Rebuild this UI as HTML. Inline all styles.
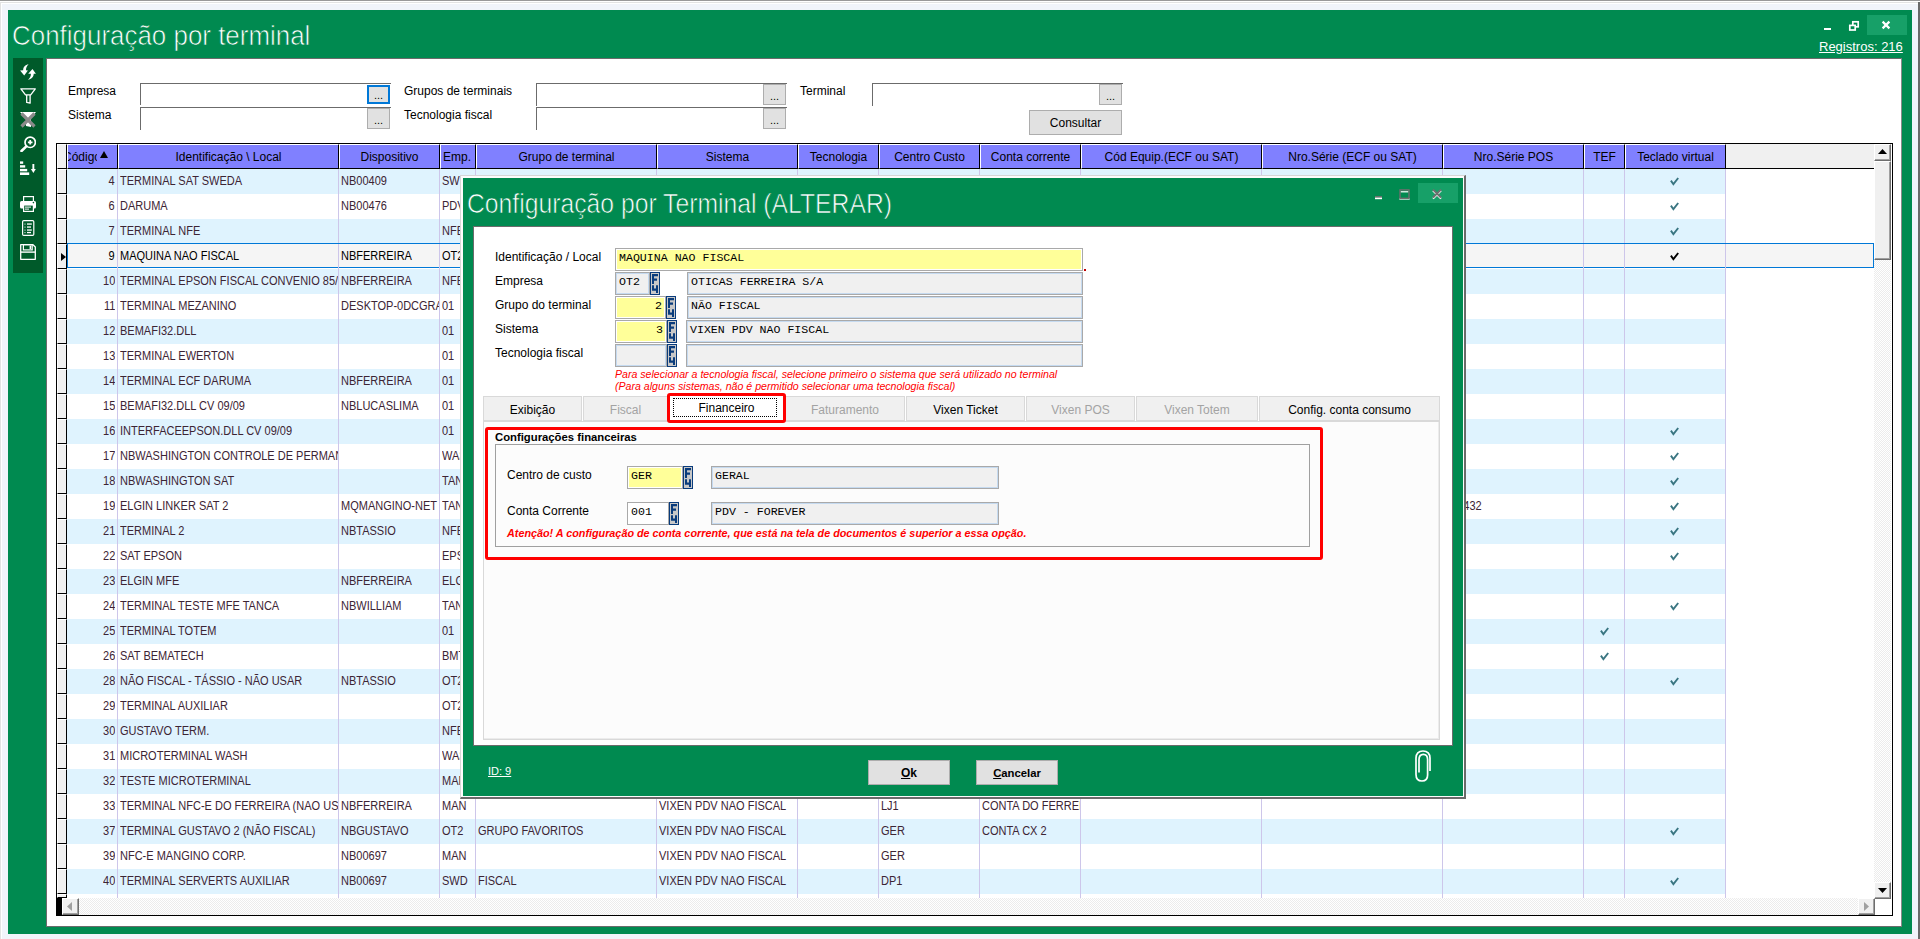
<!DOCTYPE html><html><head><meta charset="utf-8"><title>Configuração por terminal</title><style>
*{margin:0;padding:0;box-sizing:border-box}
html,body{width:1920px;height:939px;overflow:hidden;background:#f1f4fa;font-family:"Liberation Sans",sans-serif;position:relative}
.a{position:absolute}
.t{position:absolute;white-space:pre;line-height:1}
</style></head><body>
<div class="a" style="left:0px;top:0px;width:1920px;height:1px;background:#999999"></div>
<div class="a" style="left:0px;top:1px;width:1920px;height:1px;background:#ffffff"></div>
<div class="a" style="left:0px;top:2px;width:1918px;height:1px;background:#e2e2e2"></div>
<div class="a" style="left:1px;top:3px;width:1917px;height:1px;background:#ffffff"></div>
<div class="a" style="left:0px;top:2px;width:1px;height:937px;background:#e2e2e2"></div>
<div class="a" style="left:1px;top:3px;width:1px;height:936px;background:#ffffff"></div>
<div class="a" style="left:1918px;top:2px;width:2px;height:937px;background:#6a6a6a"></div>
<div class="a" style="left:8px;top:10px;width:1904px;height:924px;background:#008a50"></div>
<div class="t" style="left:12px;top:20px;line-height:32px;height:32px;font-size:27.5px;color:#fff;transform:scaleX(0.943);transform-origin:0 0;-webkit-text-stroke:0.7px #008a50">Configuração por terminal</div>
<div class="a" style="left:1867px;top:15px;width:40px;height:20px;background:#17a068"></div>
<svg class="a" style="left:1818px;top:15px" width="90" height="22" viewBox="0 0 90 22"><rect x="6" y="13" width="7" height="2" fill="#fff"/><rect x="34.8" y="6.8" width="5.4" height="5" fill="none" stroke="#fff" stroke-width="1.7"/><rect x="31.8" y="10.4" width="5.4" height="4.6" fill="#008a50" stroke="#fff" stroke-width="1.7"/><path d="M64.6 6.6L71.4 13.4M71.4 6.6L64.6 13.4" stroke="#fff" stroke-width="2.2"/></svg>
<div class="t" style="left:1819px;top:39px;line-height:15px;height:15px;font-size:13px;color:#fff;text-decoration:underline">Registros: 216</div>
<div class="a" style="left:13px;top:58px;width:30px;height:215px;background:#005a2a"></div>
<svg class="a" style="left:20px;top:64px" width="16" height="16" viewBox="0 0 16 16"><path d="M8.6 0.3C5.3 0.9 3.1 3 3.2 6.3L0.1 6.4L4.2 11.5L7.9 6.4L6 6.3C5.9 3.9 6.9 1.9 8.6 0.3Z" fill="#fff"/><path d="M8 15.8C11.2 15.1 13.7 13 13.7 9.7L15.9 9.7L12.5 5L8.2 9.7L10.9 9.7C11 12.1 10 14.2 8 15.8Z" fill="#fff"/></svg>
<svg class="a" style="left:20px;top:88px" width="16" height="16" viewBox="0 0 16 16"><path d="M0.9 0.8H15.3L10.7 6.9H5.5Z" fill="none" stroke="#fff" stroke-width="1.3" stroke-linejoin="round"/><path d="M6.7 6.9V14.4L10.1 15.2V6.9" fill="none" stroke="#fff" stroke-width="1.3" stroke-linejoin="round"/></svg>
<svg class="a" style="left:20px;top:112px" width="16" height="16" viewBox="0 0 16 16"><path d="M0 0H16L11 6V15L6 14V6Z" fill="#fff"/><path d="M1.5 1.5L14.5 14.5M14.5 1.5L1.5 14.5" stroke="#8a8a8a" stroke-width="3.2"/></svg>
<svg class="a" style="left:20px;top:136px" width="16" height="16" viewBox="0 0 16 16"><circle cx="10.2" cy="6.3" r="5.2" fill="none" stroke="#fff" stroke-width="1.7"/><path d="M10.2 4V8.6M7.9 6.3H12.5" stroke="#fff" stroke-width="1.8"/><path d="M6.3 10.4L1.5 15" stroke="#fff" stroke-width="2.6" stroke-linecap="round"/></svg>
<svg class="a" style="left:20px;top:160px" width="16" height="16" viewBox="0 0 16 16"><rect x="0" y="1.4" width="3.2" height="2.4" fill="#fff"/><rect x="0" y="5.2" width="5.2" height="2.4" fill="#fff"/><rect x="0" y="8.9" width="7.2" height="2.4" fill="#fff"/><rect x="0" y="12.4" width="9.2" height="2.6" fill="#fff"/><rect x="12.4" y="4" width="1.9" height="6" fill="#fff"/><path d="M10.9 9H15.8L13.35 13z" fill="#fff"/></svg>
<svg class="a" style="left:20px;top:196px" width="16" height="16" viewBox="0 0 16 16"><rect x="3.6" y="0.6" width="9.8" height="5" fill="none" stroke="#fff" stroke-width="1.2"/><rect x="0" y="5" width="16" height="7.5" rx="1.6" fill="#fff"/><rect x="3.6" y="9" width="9.8" height="6.4" fill="#005a2a" stroke="#fff" stroke-width="1.2"/><rect x="5" y="10.6" width="6" height="1" fill="#fff"/><rect x="5" y="12.6" width="4" height="1" fill="#fff"/><circle cx="13.4" cy="6.6" r="0.8" fill="#005a2a"/></svg>
<svg class="a" style="left:20px;top:220px" width="16" height="16" viewBox="0 0 16 16"><rect x="2.6" y="0.6" width="11.2" height="14.8" rx="1.2" fill="none" stroke="#fff" stroke-width="1.2"/><rect x="4.5" y="3.6" width="1" height="1" fill="#fff"/><rect x="7" y="3.4" width="4.8" height="1.3" fill="#fff"/><rect x="4.5" y="6.6" width="1" height="1" fill="#fff"/><rect x="7" y="6.4" width="4" height="1.3" fill="#fff"/><rect x="4.5" y="9.6" width="1" height="1" fill="#fff"/><rect x="7" y="9.4" width="4.8" height="1.3" fill="#fff"/><rect x="4.5" y="12.1" width="1" height="1" fill="#fff"/><rect x="7" y="11.9" width="4" height="1.3" fill="#fff"/></svg>
<svg class="a" style="left:20px;top:244px" width="16" height="16" viewBox="0 0 16 16"><path d="M0.7 0.7H13L15.3 3V15.3H0.7Z" fill="none" stroke="#fff" stroke-width="1.3" stroke-linejoin="round"/><rect x="3.4" y="0.7" width="8.8" height="5.2" fill="none" stroke="#fff" stroke-width="1.2"/><rect x="9.6" y="1.6" width="1.6" height="3.4" fill="#fff"/><rect x="0.7" y="7.4" width="14.6" height="1.4" fill="#fff"/></svg>
<div class="a" style="left:46px;top:58px;width:1856px;height:869px;background:#fff;border-top:1px solid #6b6b6b;border-left:1px solid #6b6b6b;border-right:1px solid #8a8a8a;border-bottom:1px solid #6b6b6b"></div>
<div class="t" style="left:68px;top:84px;line-height:14px;height:14px;font-size:12px;color:#000">Empresa</div>
<div class="t" style="left:68px;top:108px;line-height:14px;height:14px;font-size:12px;color:#000">Sistema</div>
<div class="a" style="left:140px;top:83px;width:251px;height:22px;border-top:1px solid #6b6b6b;border-left:1px solid #6b6b6b;background:#fff"></div>
<div class="a" style="left:367px;top:85px;width:23px;height:19px;background:#e1e1e1;border:2px solid #0078d7"></div>
<div class="t" style="left:367px;top:90px;line-height:10px;height:10px;width:23px;overflow:hidden;text-align:center;font-size:11px;color:#000">...</div>
<div class="a" style="left:140px;top:107px;width:251px;height:23px;border-top:1px solid #6b6b6b;border-left:1px solid #6b6b6b;background:#fff"></div>
<div class="a" style="left:367px;top:108px;width:23px;height:21px;background:#e1e1e1;border:1px solid #adadad"></div>
<div class="t" style="left:367px;top:115px;line-height:10px;height:10px;width:23px;overflow:hidden;text-align:center;font-size:11px;color:#000">...</div>
<div class="t" style="left:404px;top:84px;line-height:14px;height:14px;font-size:12px;color:#000">Grupos de terminais</div>
<div class="t" style="left:404px;top:108px;line-height:14px;height:14px;font-size:12px;color:#000">Tecnologia fiscal</div>
<div class="a" style="left:536px;top:83px;width:251px;height:23px;border-top:1px solid #6b6b6b;border-left:1px solid #6b6b6b;background:#fff"></div>
<div class="a" style="left:763px;top:84px;width:23px;height:21px;background:#e1e1e1;border:1px solid #adadad"></div>
<div class="t" style="left:763px;top:91px;line-height:10px;height:10px;width:23px;overflow:hidden;text-align:center;font-size:11px;color:#000">...</div>
<div class="a" style="left:536px;top:107px;width:251px;height:23px;border-top:1px solid #6b6b6b;border-left:1px solid #6b6b6b;background:#fff"></div>
<div class="a" style="left:763px;top:108px;width:23px;height:21px;background:#e1e1e1;border:1px solid #adadad"></div>
<div class="t" style="left:763px;top:115px;line-height:10px;height:10px;width:23px;overflow:hidden;text-align:center;font-size:11px;color:#000">...</div>
<div class="t" style="left:800px;top:84px;line-height:14px;height:14px;font-size:12px;color:#000">Terminal</div>
<div class="a" style="left:872px;top:83px;width:251px;height:23px;border-top:1px solid #6b6b6b;border-left:1px solid #6b6b6b;background:#fff"></div>
<div class="a" style="left:1099px;top:84px;width:23px;height:21px;background:#e1e1e1;border:1px solid #adadad"></div>
<div class="t" style="left:1099px;top:91px;line-height:10px;height:10px;width:23px;overflow:hidden;text-align:center;font-size:11px;color:#000">...</div>
<div class="a" style="left:1029px;top:110px;width:93px;height:25px;background:#e1e1e1;border:1px solid #adadad"></div>
<div class="t" style="left:1029px;top:116px;line-height:14px;height:14px;width:93px;overflow:hidden;text-align:center;font-size:12px;color:#000">Consultar</div>
<div class="a" style="left:56px;top:143px;width:1837px;height:773px;border:1px solid #000;background:#fff"></div>
<div class="a" style="left:1726px;top:144px;width:148px;height:25px;background:#f0f0f0;border-bottom:1px solid #000"></div>
<div class="a" style="left:57px;top:144px;width:10px;height:25px;background:#f0f0f0;border-top:1px solid #fff;border-left:1px solid #fff;border-right:1px solid #000;border-bottom:1px solid #000"></div>
<div class="a" style="left:67px;top:144px;width:51px;height:25px;background:#8080ff;border-top:1px solid #fff;border-left:1px solid #fff;border-right:1px solid #000;border-bottom:1px solid #000"></div>
<div class="t" style="left:68px;top:150px;line-height:14px;height:14px;width:29px;overflow:hidden;font-size:12px;color:#000"><span style="margin-left:-5px">Código</span></div>
<svg class="a" style="left:100px;top:151px" width="8" height="7"><path d="M4 0L8 7H0z" fill="#000"/></svg>
<div class="a" style="left:118px;top:144px;width:221px;height:25px;background:#8080ff;border-top:1px solid #fff;border-left:1px solid #fff;border-right:1px solid #000;border-bottom:1px solid #000"></div>
<div class="t" style="left:118px;top:150px;line-height:14px;height:14px;width:221px;overflow:hidden;text-align:center;font-size:12px;color:#000">Identificação \ Local</div>
<div class="a" style="left:339px;top:144px;width:101px;height:25px;background:#8080ff;border-top:1px solid #fff;border-left:1px solid #fff;border-right:1px solid #000;border-bottom:1px solid #000"></div>
<div class="t" style="left:339px;top:150px;line-height:14px;height:14px;width:101px;overflow:hidden;text-align:center;font-size:12px;color:#000">Dispositivo</div>
<div class="a" style="left:440px;top:144px;width:36px;height:25px;background:#8080ff;border-top:1px solid #fff;border-left:1px solid #fff;border-right:1px solid #000;border-bottom:1px solid #000"></div>
<div class="t" style="left:443px;top:150px;line-height:14px;height:14px;font-size:12px;color:#000">Emp.</div>
<div class="a" style="left:476px;top:144px;width:181px;height:25px;background:#8080ff;border-top:1px solid #fff;border-left:1px solid #fff;border-right:1px solid #000;border-bottom:1px solid #000"></div>
<div class="t" style="left:476px;top:150px;line-height:14px;height:14px;width:181px;overflow:hidden;text-align:center;font-size:12px;color:#000">Grupo de terminal</div>
<div class="a" style="left:657px;top:144px;width:141px;height:25px;background:#8080ff;border-top:1px solid #fff;border-left:1px solid #fff;border-right:1px solid #000;border-bottom:1px solid #000"></div>
<div class="t" style="left:657px;top:150px;line-height:14px;height:14px;width:141px;overflow:hidden;text-align:center;font-size:12px;color:#000">Sistema</div>
<div class="a" style="left:798px;top:144px;width:81px;height:25px;background:#8080ff;border-top:1px solid #fff;border-left:1px solid #fff;border-right:1px solid #000;border-bottom:1px solid #000"></div>
<div class="t" style="left:798px;top:150px;line-height:14px;height:14px;width:81px;overflow:hidden;text-align:center;font-size:12px;color:#000">Tecnologia</div>
<div class="a" style="left:879px;top:144px;width:101px;height:25px;background:#8080ff;border-top:1px solid #fff;border-left:1px solid #fff;border-right:1px solid #000;border-bottom:1px solid #000"></div>
<div class="t" style="left:879px;top:150px;line-height:14px;height:14px;width:101px;overflow:hidden;text-align:center;font-size:12px;color:#000">Centro Custo</div>
<div class="a" style="left:980px;top:144px;width:101px;height:25px;background:#8080ff;border-top:1px solid #fff;border-left:1px solid #fff;border-right:1px solid #000;border-bottom:1px solid #000"></div>
<div class="t" style="left:980px;top:150px;line-height:14px;height:14px;width:101px;overflow:hidden;text-align:center;font-size:12px;color:#000">Conta corrente</div>
<div class="a" style="left:1081px;top:144px;width:181px;height:25px;background:#8080ff;border-top:1px solid #fff;border-left:1px solid #fff;border-right:1px solid #000;border-bottom:1px solid #000"></div>
<div class="t" style="left:1081px;top:150px;line-height:14px;height:14px;width:181px;overflow:hidden;text-align:center;font-size:12px;color:#000">Cód Equip.(ECF ou SAT)</div>
<div class="a" style="left:1262px;top:144px;width:181px;height:25px;background:#8080ff;border-top:1px solid #fff;border-left:1px solid #fff;border-right:1px solid #000;border-bottom:1px solid #000"></div>
<div class="t" style="left:1262px;top:150px;line-height:14px;height:14px;width:181px;overflow:hidden;text-align:center;font-size:12px;color:#000">Nro.Série (ECF ou SAT)</div>
<div class="a" style="left:1443px;top:144px;width:141px;height:25px;background:#8080ff;border-top:1px solid #fff;border-left:1px solid #fff;border-right:1px solid #000;border-bottom:1px solid #000"></div>
<div class="t" style="left:1443px;top:150px;line-height:14px;height:14px;width:141px;overflow:hidden;text-align:center;font-size:12px;color:#000">Nro.Série POS</div>
<div class="a" style="left:1584px;top:144px;width:41px;height:25px;background:#8080ff;border-top:1px solid #fff;border-left:1px solid #fff;border-right:1px solid #000;border-bottom:1px solid #000"></div>
<div class="t" style="left:1584px;top:150px;line-height:14px;height:14px;width:41px;overflow:hidden;text-align:center;font-size:12px;color:#000">TEF</div>
<div class="a" style="left:1625px;top:144px;width:101px;height:25px;background:#8080ff;border-top:1px solid #fff;border-left:1px solid #fff;border-right:1px solid #000;border-bottom:1px solid #000"></div>
<div class="t" style="left:1625px;top:150px;line-height:14px;height:14px;width:101px;overflow:hidden;text-align:center;font-size:12px;color:#000">Teclado virtual</div>
<div class="a" style="left:57px;top:169px;width:10px;height:25px;background:#f0f0f0;border-top:1px solid #fff;border-left:1px solid #fff;border-right:1px solid #000;border-bottom:1px solid #000"></div>
<div class="a" style="left:67px;top:169px;width:1659px;height:25px;background:#dff3fe"></div>
<div class="a" style="left:117px;top:169px;width:1px;height:25px;background:#cdc6ea"></div>
<div class="a" style="left:338px;top:169px;width:1px;height:25px;background:#cdc6ea"></div>
<div class="a" style="left:439px;top:169px;width:1px;height:25px;background:#cdc6ea"></div>
<div class="a" style="left:475px;top:169px;width:1px;height:25px;background:#cdc6ea"></div>
<div class="a" style="left:656px;top:169px;width:1px;height:25px;background:#cdc6ea"></div>
<div class="a" style="left:797px;top:169px;width:1px;height:25px;background:#cdc6ea"></div>
<div class="a" style="left:878px;top:169px;width:1px;height:25px;background:#cdc6ea"></div>
<div class="a" style="left:979px;top:169px;width:1px;height:25px;background:#cdc6ea"></div>
<div class="a" style="left:1080px;top:169px;width:1px;height:25px;background:#cdc6ea"></div>
<div class="a" style="left:1261px;top:169px;width:1px;height:25px;background:#cdc6ea"></div>
<div class="a" style="left:1442px;top:169px;width:1px;height:25px;background:#cdc6ea"></div>
<div class="a" style="left:1583px;top:169px;width:1px;height:25px;background:#cdc6ea"></div>
<div class="a" style="left:1624px;top:169px;width:1px;height:25px;background:#cdc6ea"></div>
<div class="a" style="left:1725px;top:169px;width:1px;height:25px;background:#cdc6ea"></div>
<div class="t" style="left:67px;top:169px;line-height:24px;height:24px;width:48px;overflow:hidden;text-align:right;font-size:12px;color:#3c2434"><span style="display:inline-block;transform:scaleX(0.917);transform-origin:100% 0">4</span></div>
<div class="t" style="left:120px;top:169px;line-height:24px;height:24px;width:218px;overflow:hidden;font-size:12px;color:#3c2434"><span style="display:inline-block;transform:scaleX(0.917);transform-origin:0 0">TERMINAL SAT SWEDA</span></div>
<div class="t" style="left:341px;top:169px;line-height:24px;height:24px;width:98px;overflow:hidden;font-size:12px;color:#3c2434"><span style="display:inline-block;transform:scaleX(0.917);transform-origin:0 0">NB00409</span></div>
<div class="t" style="left:442px;top:169px;line-height:24px;height:24px;width:33px;overflow:hidden;font-size:12px;color:#3c2434"><span style="display:inline-block;transform:scaleX(0.917);transform-origin:0 0">SWD</span></div>
<svg class="a" style="left:1670px;top:177px" width="9" height="9" viewBox="0 0 9 9"><path d="M0.9 3.6L3.4 7.2L8.2 1" fill="none" stroke="#3a7682" stroke-width="1.9"/></svg>
<div class="a" style="left:57px;top:194px;width:10px;height:25px;background:#f0f0f0;border-top:1px solid #fff;border-left:1px solid #fff;border-right:1px solid #000;border-bottom:1px solid #000"></div>
<div class="a" style="left:67px;top:194px;width:1659px;height:25px;background:#ffffff"></div>
<div class="a" style="left:117px;top:194px;width:1px;height:25px;background:#cdc6ea"></div>
<div class="a" style="left:338px;top:194px;width:1px;height:25px;background:#cdc6ea"></div>
<div class="a" style="left:439px;top:194px;width:1px;height:25px;background:#cdc6ea"></div>
<div class="a" style="left:475px;top:194px;width:1px;height:25px;background:#cdc6ea"></div>
<div class="a" style="left:656px;top:194px;width:1px;height:25px;background:#cdc6ea"></div>
<div class="a" style="left:797px;top:194px;width:1px;height:25px;background:#cdc6ea"></div>
<div class="a" style="left:878px;top:194px;width:1px;height:25px;background:#cdc6ea"></div>
<div class="a" style="left:979px;top:194px;width:1px;height:25px;background:#cdc6ea"></div>
<div class="a" style="left:1080px;top:194px;width:1px;height:25px;background:#cdc6ea"></div>
<div class="a" style="left:1261px;top:194px;width:1px;height:25px;background:#cdc6ea"></div>
<div class="a" style="left:1442px;top:194px;width:1px;height:25px;background:#cdc6ea"></div>
<div class="a" style="left:1583px;top:194px;width:1px;height:25px;background:#cdc6ea"></div>
<div class="a" style="left:1624px;top:194px;width:1px;height:25px;background:#cdc6ea"></div>
<div class="a" style="left:1725px;top:194px;width:1px;height:25px;background:#cdc6ea"></div>
<div class="t" style="left:67px;top:194px;line-height:24px;height:24px;width:48px;overflow:hidden;text-align:right;font-size:12px;color:#3c2434"><span style="display:inline-block;transform:scaleX(0.917);transform-origin:100% 0">6</span></div>
<div class="t" style="left:120px;top:194px;line-height:24px;height:24px;width:218px;overflow:hidden;font-size:12px;color:#3c2434"><span style="display:inline-block;transform:scaleX(0.917);transform-origin:0 0">DARUMA</span></div>
<div class="t" style="left:341px;top:194px;line-height:24px;height:24px;width:98px;overflow:hidden;font-size:12px;color:#3c2434"><span style="display:inline-block;transform:scaleX(0.917);transform-origin:0 0">NB00476</span></div>
<div class="t" style="left:442px;top:194px;line-height:24px;height:24px;width:33px;overflow:hidden;font-size:12px;color:#3c2434"><span style="display:inline-block;transform:scaleX(0.917);transform-origin:0 0">PDV</span></div>
<svg class="a" style="left:1670px;top:202px" width="9" height="9" viewBox="0 0 9 9"><path d="M0.9 3.6L3.4 7.2L8.2 1" fill="none" stroke="#3a7682" stroke-width="1.9"/></svg>
<div class="a" style="left:57px;top:219px;width:10px;height:25px;background:#f0f0f0;border-top:1px solid #fff;border-left:1px solid #fff;border-right:1px solid #000;border-bottom:1px solid #000"></div>
<div class="a" style="left:67px;top:219px;width:1659px;height:25px;background:#dff3fe"></div>
<div class="a" style="left:117px;top:219px;width:1px;height:25px;background:#cdc6ea"></div>
<div class="a" style="left:338px;top:219px;width:1px;height:25px;background:#cdc6ea"></div>
<div class="a" style="left:439px;top:219px;width:1px;height:25px;background:#cdc6ea"></div>
<div class="a" style="left:475px;top:219px;width:1px;height:25px;background:#cdc6ea"></div>
<div class="a" style="left:656px;top:219px;width:1px;height:25px;background:#cdc6ea"></div>
<div class="a" style="left:797px;top:219px;width:1px;height:25px;background:#cdc6ea"></div>
<div class="a" style="left:878px;top:219px;width:1px;height:25px;background:#cdc6ea"></div>
<div class="a" style="left:979px;top:219px;width:1px;height:25px;background:#cdc6ea"></div>
<div class="a" style="left:1080px;top:219px;width:1px;height:25px;background:#cdc6ea"></div>
<div class="a" style="left:1261px;top:219px;width:1px;height:25px;background:#cdc6ea"></div>
<div class="a" style="left:1442px;top:219px;width:1px;height:25px;background:#cdc6ea"></div>
<div class="a" style="left:1583px;top:219px;width:1px;height:25px;background:#cdc6ea"></div>
<div class="a" style="left:1624px;top:219px;width:1px;height:25px;background:#cdc6ea"></div>
<div class="a" style="left:1725px;top:219px;width:1px;height:25px;background:#cdc6ea"></div>
<div class="t" style="left:67px;top:219px;line-height:24px;height:24px;width:48px;overflow:hidden;text-align:right;font-size:12px;color:#3c2434"><span style="display:inline-block;transform:scaleX(0.917);transform-origin:100% 0">7</span></div>
<div class="t" style="left:120px;top:219px;line-height:24px;height:24px;width:218px;overflow:hidden;font-size:12px;color:#3c2434"><span style="display:inline-block;transform:scaleX(0.917);transform-origin:0 0">TERMINAL NFE</span></div>
<div class="t" style="left:442px;top:219px;line-height:24px;height:24px;width:33px;overflow:hidden;font-size:12px;color:#3c2434"><span style="display:inline-block;transform:scaleX(0.917);transform-origin:0 0">NFE</span></div>
<svg class="a" style="left:1670px;top:227px" width="9" height="9" viewBox="0 0 9 9"><path d="M0.9 3.6L3.4 7.2L8.2 1" fill="none" stroke="#3a7682" stroke-width="1.9"/></svg>
<div class="a" style="left:57px;top:244px;width:10px;height:25px;background:#f0f0f0;border-top:1px solid #fff;border-left:1px solid #fff;border-right:1px solid #000;border-bottom:1px solid #000"></div>
<div class="a" style="left:67px;top:243px;width:1807px;height:25px;background:#f5f5f5;border:1px solid #0078d7"></div>
<svg class="a" style="left:61px;top:253px" width="5" height="8"><path d="M0 0L5 4L0 8z" fill="#000"/></svg>
<div class="a" style="left:117px;top:244px;width:1px;height:25px;background:#cdc6ea"></div>
<div class="a" style="left:338px;top:244px;width:1px;height:25px;background:#cdc6ea"></div>
<div class="a" style="left:439px;top:244px;width:1px;height:25px;background:#cdc6ea"></div>
<div class="a" style="left:475px;top:244px;width:1px;height:25px;background:#cdc6ea"></div>
<div class="a" style="left:656px;top:244px;width:1px;height:25px;background:#cdc6ea"></div>
<div class="a" style="left:797px;top:244px;width:1px;height:25px;background:#cdc6ea"></div>
<div class="a" style="left:878px;top:244px;width:1px;height:25px;background:#cdc6ea"></div>
<div class="a" style="left:979px;top:244px;width:1px;height:25px;background:#cdc6ea"></div>
<div class="a" style="left:1080px;top:244px;width:1px;height:25px;background:#cdc6ea"></div>
<div class="a" style="left:1261px;top:244px;width:1px;height:25px;background:#cdc6ea"></div>
<div class="a" style="left:1442px;top:244px;width:1px;height:25px;background:#cdc6ea"></div>
<div class="a" style="left:1583px;top:244px;width:1px;height:25px;background:#cdc6ea"></div>
<div class="a" style="left:1624px;top:244px;width:1px;height:25px;background:#cdc6ea"></div>
<div class="a" style="left:1725px;top:244px;width:1px;height:25px;background:#cdc6ea"></div>
<div class="t" style="left:67px;top:244px;line-height:24px;height:24px;width:48px;overflow:hidden;text-align:right;font-size:12px;color:#000"><span style="display:inline-block;transform:scaleX(0.917);transform-origin:100% 0">9</span></div>
<div class="t" style="left:120px;top:244px;line-height:24px;height:24px;width:218px;overflow:hidden;font-size:12px;color:#000"><span style="display:inline-block;transform:scaleX(0.917);transform-origin:0 0">MAQUINA NAO FISCAL</span></div>
<div class="t" style="left:341px;top:244px;line-height:24px;height:24px;width:98px;overflow:hidden;font-size:12px;color:#000"><span style="display:inline-block;transform:scaleX(0.917);transform-origin:0 0">NBFERREIRA</span></div>
<div class="t" style="left:442px;top:244px;line-height:24px;height:24px;width:33px;overflow:hidden;font-size:12px;color:#000"><span style="display:inline-block;transform:scaleX(0.917);transform-origin:0 0">OT2</span></div>
<svg class="a" style="left:1670px;top:252px" width="9" height="9" viewBox="0 0 9 9"><path d="M0.9 3.6L3.4 7.2L8.2 1" fill="none" stroke="#000" stroke-width="1.9"/></svg>
<div class="a" style="left:57px;top:269px;width:10px;height:25px;background:#f0f0f0;border-top:1px solid #fff;border-left:1px solid #fff;border-right:1px solid #000;border-bottom:1px solid #000"></div>
<div class="a" style="left:67px;top:269px;width:1659px;height:25px;background:#dff3fe"></div>
<div class="a" style="left:117px;top:269px;width:1px;height:25px;background:#cdc6ea"></div>
<div class="a" style="left:338px;top:269px;width:1px;height:25px;background:#cdc6ea"></div>
<div class="a" style="left:439px;top:269px;width:1px;height:25px;background:#cdc6ea"></div>
<div class="a" style="left:475px;top:269px;width:1px;height:25px;background:#cdc6ea"></div>
<div class="a" style="left:656px;top:269px;width:1px;height:25px;background:#cdc6ea"></div>
<div class="a" style="left:797px;top:269px;width:1px;height:25px;background:#cdc6ea"></div>
<div class="a" style="left:878px;top:269px;width:1px;height:25px;background:#cdc6ea"></div>
<div class="a" style="left:979px;top:269px;width:1px;height:25px;background:#cdc6ea"></div>
<div class="a" style="left:1080px;top:269px;width:1px;height:25px;background:#cdc6ea"></div>
<div class="a" style="left:1261px;top:269px;width:1px;height:25px;background:#cdc6ea"></div>
<div class="a" style="left:1442px;top:269px;width:1px;height:25px;background:#cdc6ea"></div>
<div class="a" style="left:1583px;top:269px;width:1px;height:25px;background:#cdc6ea"></div>
<div class="a" style="left:1624px;top:269px;width:1px;height:25px;background:#cdc6ea"></div>
<div class="a" style="left:1725px;top:269px;width:1px;height:25px;background:#cdc6ea"></div>
<div class="t" style="left:67px;top:269px;line-height:24px;height:24px;width:48px;overflow:hidden;text-align:right;font-size:12px;color:#3c2434"><span style="display:inline-block;transform:scaleX(0.917);transform-origin:100% 0">10</span></div>
<div class="t" style="left:120px;top:269px;line-height:24px;height:24px;width:218px;overflow:hidden;font-size:12px;color:#3c2434"><span style="display:inline-block;transform:scaleX(0.917);transform-origin:0 0">TERMINAL EPSON FISCAL CONVENIO 85/94</span></div>
<div class="t" style="left:341px;top:269px;line-height:24px;height:24px;width:98px;overflow:hidden;font-size:12px;color:#3c2434"><span style="display:inline-block;transform:scaleX(0.917);transform-origin:0 0">NBFERREIRA</span></div>
<div class="t" style="left:442px;top:269px;line-height:24px;height:24px;width:33px;overflow:hidden;font-size:12px;color:#3c2434"><span style="display:inline-block;transform:scaleX(0.917);transform-origin:0 0">NFE</span></div>
<div class="a" style="left:57px;top:294px;width:10px;height:25px;background:#f0f0f0;border-top:1px solid #fff;border-left:1px solid #fff;border-right:1px solid #000;border-bottom:1px solid #000"></div>
<div class="a" style="left:67px;top:294px;width:1659px;height:25px;background:#ffffff"></div>
<div class="a" style="left:117px;top:294px;width:1px;height:25px;background:#cdc6ea"></div>
<div class="a" style="left:338px;top:294px;width:1px;height:25px;background:#cdc6ea"></div>
<div class="a" style="left:439px;top:294px;width:1px;height:25px;background:#cdc6ea"></div>
<div class="a" style="left:475px;top:294px;width:1px;height:25px;background:#cdc6ea"></div>
<div class="a" style="left:656px;top:294px;width:1px;height:25px;background:#cdc6ea"></div>
<div class="a" style="left:797px;top:294px;width:1px;height:25px;background:#cdc6ea"></div>
<div class="a" style="left:878px;top:294px;width:1px;height:25px;background:#cdc6ea"></div>
<div class="a" style="left:979px;top:294px;width:1px;height:25px;background:#cdc6ea"></div>
<div class="a" style="left:1080px;top:294px;width:1px;height:25px;background:#cdc6ea"></div>
<div class="a" style="left:1261px;top:294px;width:1px;height:25px;background:#cdc6ea"></div>
<div class="a" style="left:1442px;top:294px;width:1px;height:25px;background:#cdc6ea"></div>
<div class="a" style="left:1583px;top:294px;width:1px;height:25px;background:#cdc6ea"></div>
<div class="a" style="left:1624px;top:294px;width:1px;height:25px;background:#cdc6ea"></div>
<div class="a" style="left:1725px;top:294px;width:1px;height:25px;background:#cdc6ea"></div>
<div class="t" style="left:67px;top:294px;line-height:24px;height:24px;width:48px;overflow:hidden;text-align:right;font-size:12px;color:#3c2434"><span style="display:inline-block;transform:scaleX(0.917);transform-origin:100% 0">11</span></div>
<div class="t" style="left:120px;top:294px;line-height:24px;height:24px;width:218px;overflow:hidden;font-size:12px;color:#3c2434"><span style="display:inline-block;transform:scaleX(0.917);transform-origin:0 0">TERMINAL MEZANINO</span></div>
<div class="t" style="left:341px;top:294px;line-height:24px;height:24px;width:98px;overflow:hidden;font-size:12px;color:#3c2434"><span style="display:inline-block;transform:scaleX(0.917);transform-origin:0 0">DESKTOP-0DCGRAK</span></div>
<div class="t" style="left:442px;top:294px;line-height:24px;height:24px;width:33px;overflow:hidden;font-size:12px;color:#3c2434"><span style="display:inline-block;transform:scaleX(0.917);transform-origin:0 0">01</span></div>
<div class="a" style="left:57px;top:319px;width:10px;height:25px;background:#f0f0f0;border-top:1px solid #fff;border-left:1px solid #fff;border-right:1px solid #000;border-bottom:1px solid #000"></div>
<div class="a" style="left:67px;top:319px;width:1659px;height:25px;background:#dff3fe"></div>
<div class="a" style="left:117px;top:319px;width:1px;height:25px;background:#cdc6ea"></div>
<div class="a" style="left:338px;top:319px;width:1px;height:25px;background:#cdc6ea"></div>
<div class="a" style="left:439px;top:319px;width:1px;height:25px;background:#cdc6ea"></div>
<div class="a" style="left:475px;top:319px;width:1px;height:25px;background:#cdc6ea"></div>
<div class="a" style="left:656px;top:319px;width:1px;height:25px;background:#cdc6ea"></div>
<div class="a" style="left:797px;top:319px;width:1px;height:25px;background:#cdc6ea"></div>
<div class="a" style="left:878px;top:319px;width:1px;height:25px;background:#cdc6ea"></div>
<div class="a" style="left:979px;top:319px;width:1px;height:25px;background:#cdc6ea"></div>
<div class="a" style="left:1080px;top:319px;width:1px;height:25px;background:#cdc6ea"></div>
<div class="a" style="left:1261px;top:319px;width:1px;height:25px;background:#cdc6ea"></div>
<div class="a" style="left:1442px;top:319px;width:1px;height:25px;background:#cdc6ea"></div>
<div class="a" style="left:1583px;top:319px;width:1px;height:25px;background:#cdc6ea"></div>
<div class="a" style="left:1624px;top:319px;width:1px;height:25px;background:#cdc6ea"></div>
<div class="a" style="left:1725px;top:319px;width:1px;height:25px;background:#cdc6ea"></div>
<div class="t" style="left:67px;top:319px;line-height:24px;height:24px;width:48px;overflow:hidden;text-align:right;font-size:12px;color:#3c2434"><span style="display:inline-block;transform:scaleX(0.917);transform-origin:100% 0">12</span></div>
<div class="t" style="left:120px;top:319px;line-height:24px;height:24px;width:218px;overflow:hidden;font-size:12px;color:#3c2434"><span style="display:inline-block;transform:scaleX(0.917);transform-origin:0 0">BEMAFI32.DLL</span></div>
<div class="t" style="left:442px;top:319px;line-height:24px;height:24px;width:33px;overflow:hidden;font-size:12px;color:#3c2434"><span style="display:inline-block;transform:scaleX(0.917);transform-origin:0 0">01</span></div>
<div class="a" style="left:57px;top:344px;width:10px;height:25px;background:#f0f0f0;border-top:1px solid #fff;border-left:1px solid #fff;border-right:1px solid #000;border-bottom:1px solid #000"></div>
<div class="a" style="left:67px;top:344px;width:1659px;height:25px;background:#ffffff"></div>
<div class="a" style="left:117px;top:344px;width:1px;height:25px;background:#cdc6ea"></div>
<div class="a" style="left:338px;top:344px;width:1px;height:25px;background:#cdc6ea"></div>
<div class="a" style="left:439px;top:344px;width:1px;height:25px;background:#cdc6ea"></div>
<div class="a" style="left:475px;top:344px;width:1px;height:25px;background:#cdc6ea"></div>
<div class="a" style="left:656px;top:344px;width:1px;height:25px;background:#cdc6ea"></div>
<div class="a" style="left:797px;top:344px;width:1px;height:25px;background:#cdc6ea"></div>
<div class="a" style="left:878px;top:344px;width:1px;height:25px;background:#cdc6ea"></div>
<div class="a" style="left:979px;top:344px;width:1px;height:25px;background:#cdc6ea"></div>
<div class="a" style="left:1080px;top:344px;width:1px;height:25px;background:#cdc6ea"></div>
<div class="a" style="left:1261px;top:344px;width:1px;height:25px;background:#cdc6ea"></div>
<div class="a" style="left:1442px;top:344px;width:1px;height:25px;background:#cdc6ea"></div>
<div class="a" style="left:1583px;top:344px;width:1px;height:25px;background:#cdc6ea"></div>
<div class="a" style="left:1624px;top:344px;width:1px;height:25px;background:#cdc6ea"></div>
<div class="a" style="left:1725px;top:344px;width:1px;height:25px;background:#cdc6ea"></div>
<div class="t" style="left:67px;top:344px;line-height:24px;height:24px;width:48px;overflow:hidden;text-align:right;font-size:12px;color:#3c2434"><span style="display:inline-block;transform:scaleX(0.917);transform-origin:100% 0">13</span></div>
<div class="t" style="left:120px;top:344px;line-height:24px;height:24px;width:218px;overflow:hidden;font-size:12px;color:#3c2434"><span style="display:inline-block;transform:scaleX(0.917);transform-origin:0 0">TERMINAL EWERTON</span></div>
<div class="t" style="left:442px;top:344px;line-height:24px;height:24px;width:33px;overflow:hidden;font-size:12px;color:#3c2434"><span style="display:inline-block;transform:scaleX(0.917);transform-origin:0 0">01</span></div>
<div class="a" style="left:57px;top:369px;width:10px;height:25px;background:#f0f0f0;border-top:1px solid #fff;border-left:1px solid #fff;border-right:1px solid #000;border-bottom:1px solid #000"></div>
<div class="a" style="left:67px;top:369px;width:1659px;height:25px;background:#dff3fe"></div>
<div class="a" style="left:117px;top:369px;width:1px;height:25px;background:#cdc6ea"></div>
<div class="a" style="left:338px;top:369px;width:1px;height:25px;background:#cdc6ea"></div>
<div class="a" style="left:439px;top:369px;width:1px;height:25px;background:#cdc6ea"></div>
<div class="a" style="left:475px;top:369px;width:1px;height:25px;background:#cdc6ea"></div>
<div class="a" style="left:656px;top:369px;width:1px;height:25px;background:#cdc6ea"></div>
<div class="a" style="left:797px;top:369px;width:1px;height:25px;background:#cdc6ea"></div>
<div class="a" style="left:878px;top:369px;width:1px;height:25px;background:#cdc6ea"></div>
<div class="a" style="left:979px;top:369px;width:1px;height:25px;background:#cdc6ea"></div>
<div class="a" style="left:1080px;top:369px;width:1px;height:25px;background:#cdc6ea"></div>
<div class="a" style="left:1261px;top:369px;width:1px;height:25px;background:#cdc6ea"></div>
<div class="a" style="left:1442px;top:369px;width:1px;height:25px;background:#cdc6ea"></div>
<div class="a" style="left:1583px;top:369px;width:1px;height:25px;background:#cdc6ea"></div>
<div class="a" style="left:1624px;top:369px;width:1px;height:25px;background:#cdc6ea"></div>
<div class="a" style="left:1725px;top:369px;width:1px;height:25px;background:#cdc6ea"></div>
<div class="t" style="left:67px;top:369px;line-height:24px;height:24px;width:48px;overflow:hidden;text-align:right;font-size:12px;color:#3c2434"><span style="display:inline-block;transform:scaleX(0.917);transform-origin:100% 0">14</span></div>
<div class="t" style="left:120px;top:369px;line-height:24px;height:24px;width:218px;overflow:hidden;font-size:12px;color:#3c2434"><span style="display:inline-block;transform:scaleX(0.917);transform-origin:0 0">TERMINAL ECF DARUMA</span></div>
<div class="t" style="left:341px;top:369px;line-height:24px;height:24px;width:98px;overflow:hidden;font-size:12px;color:#3c2434"><span style="display:inline-block;transform:scaleX(0.917);transform-origin:0 0">NBFERREIRA</span></div>
<div class="t" style="left:442px;top:369px;line-height:24px;height:24px;width:33px;overflow:hidden;font-size:12px;color:#3c2434"><span style="display:inline-block;transform:scaleX(0.917);transform-origin:0 0">01</span></div>
<div class="a" style="left:57px;top:394px;width:10px;height:25px;background:#f0f0f0;border-top:1px solid #fff;border-left:1px solid #fff;border-right:1px solid #000;border-bottom:1px solid #000"></div>
<div class="a" style="left:67px;top:394px;width:1659px;height:25px;background:#ffffff"></div>
<div class="a" style="left:117px;top:394px;width:1px;height:25px;background:#cdc6ea"></div>
<div class="a" style="left:338px;top:394px;width:1px;height:25px;background:#cdc6ea"></div>
<div class="a" style="left:439px;top:394px;width:1px;height:25px;background:#cdc6ea"></div>
<div class="a" style="left:475px;top:394px;width:1px;height:25px;background:#cdc6ea"></div>
<div class="a" style="left:656px;top:394px;width:1px;height:25px;background:#cdc6ea"></div>
<div class="a" style="left:797px;top:394px;width:1px;height:25px;background:#cdc6ea"></div>
<div class="a" style="left:878px;top:394px;width:1px;height:25px;background:#cdc6ea"></div>
<div class="a" style="left:979px;top:394px;width:1px;height:25px;background:#cdc6ea"></div>
<div class="a" style="left:1080px;top:394px;width:1px;height:25px;background:#cdc6ea"></div>
<div class="a" style="left:1261px;top:394px;width:1px;height:25px;background:#cdc6ea"></div>
<div class="a" style="left:1442px;top:394px;width:1px;height:25px;background:#cdc6ea"></div>
<div class="a" style="left:1583px;top:394px;width:1px;height:25px;background:#cdc6ea"></div>
<div class="a" style="left:1624px;top:394px;width:1px;height:25px;background:#cdc6ea"></div>
<div class="a" style="left:1725px;top:394px;width:1px;height:25px;background:#cdc6ea"></div>
<div class="t" style="left:67px;top:394px;line-height:24px;height:24px;width:48px;overflow:hidden;text-align:right;font-size:12px;color:#3c2434"><span style="display:inline-block;transform:scaleX(0.917);transform-origin:100% 0">15</span></div>
<div class="t" style="left:120px;top:394px;line-height:24px;height:24px;width:218px;overflow:hidden;font-size:12px;color:#3c2434"><span style="display:inline-block;transform:scaleX(0.917);transform-origin:0 0">BEMAFI32.DLL CV 09/09</span></div>
<div class="t" style="left:341px;top:394px;line-height:24px;height:24px;width:98px;overflow:hidden;font-size:12px;color:#3c2434"><span style="display:inline-block;transform:scaleX(0.917);transform-origin:0 0">NBLUCASLIMA</span></div>
<div class="t" style="left:442px;top:394px;line-height:24px;height:24px;width:33px;overflow:hidden;font-size:12px;color:#3c2434"><span style="display:inline-block;transform:scaleX(0.917);transform-origin:0 0">01</span></div>
<div class="a" style="left:57px;top:419px;width:10px;height:25px;background:#f0f0f0;border-top:1px solid #fff;border-left:1px solid #fff;border-right:1px solid #000;border-bottom:1px solid #000"></div>
<div class="a" style="left:67px;top:419px;width:1659px;height:25px;background:#dff3fe"></div>
<div class="a" style="left:117px;top:419px;width:1px;height:25px;background:#cdc6ea"></div>
<div class="a" style="left:338px;top:419px;width:1px;height:25px;background:#cdc6ea"></div>
<div class="a" style="left:439px;top:419px;width:1px;height:25px;background:#cdc6ea"></div>
<div class="a" style="left:475px;top:419px;width:1px;height:25px;background:#cdc6ea"></div>
<div class="a" style="left:656px;top:419px;width:1px;height:25px;background:#cdc6ea"></div>
<div class="a" style="left:797px;top:419px;width:1px;height:25px;background:#cdc6ea"></div>
<div class="a" style="left:878px;top:419px;width:1px;height:25px;background:#cdc6ea"></div>
<div class="a" style="left:979px;top:419px;width:1px;height:25px;background:#cdc6ea"></div>
<div class="a" style="left:1080px;top:419px;width:1px;height:25px;background:#cdc6ea"></div>
<div class="a" style="left:1261px;top:419px;width:1px;height:25px;background:#cdc6ea"></div>
<div class="a" style="left:1442px;top:419px;width:1px;height:25px;background:#cdc6ea"></div>
<div class="a" style="left:1583px;top:419px;width:1px;height:25px;background:#cdc6ea"></div>
<div class="a" style="left:1624px;top:419px;width:1px;height:25px;background:#cdc6ea"></div>
<div class="a" style="left:1725px;top:419px;width:1px;height:25px;background:#cdc6ea"></div>
<div class="t" style="left:67px;top:419px;line-height:24px;height:24px;width:48px;overflow:hidden;text-align:right;font-size:12px;color:#3c2434"><span style="display:inline-block;transform:scaleX(0.917);transform-origin:100% 0">16</span></div>
<div class="t" style="left:120px;top:419px;line-height:24px;height:24px;width:218px;overflow:hidden;font-size:12px;color:#3c2434"><span style="display:inline-block;transform:scaleX(0.917);transform-origin:0 0">INTERFACEEPSON.DLL CV 09/09</span></div>
<div class="t" style="left:442px;top:419px;line-height:24px;height:24px;width:33px;overflow:hidden;font-size:12px;color:#3c2434"><span style="display:inline-block;transform:scaleX(0.917);transform-origin:0 0">01</span></div>
<svg class="a" style="left:1670px;top:427px" width="9" height="9" viewBox="0 0 9 9"><path d="M0.9 3.6L3.4 7.2L8.2 1" fill="none" stroke="#3a7682" stroke-width="1.9"/></svg>
<div class="a" style="left:57px;top:444px;width:10px;height:25px;background:#f0f0f0;border-top:1px solid #fff;border-left:1px solid #fff;border-right:1px solid #000;border-bottom:1px solid #000"></div>
<div class="a" style="left:67px;top:444px;width:1659px;height:25px;background:#ffffff"></div>
<div class="a" style="left:117px;top:444px;width:1px;height:25px;background:#cdc6ea"></div>
<div class="a" style="left:338px;top:444px;width:1px;height:25px;background:#cdc6ea"></div>
<div class="a" style="left:439px;top:444px;width:1px;height:25px;background:#cdc6ea"></div>
<div class="a" style="left:475px;top:444px;width:1px;height:25px;background:#cdc6ea"></div>
<div class="a" style="left:656px;top:444px;width:1px;height:25px;background:#cdc6ea"></div>
<div class="a" style="left:797px;top:444px;width:1px;height:25px;background:#cdc6ea"></div>
<div class="a" style="left:878px;top:444px;width:1px;height:25px;background:#cdc6ea"></div>
<div class="a" style="left:979px;top:444px;width:1px;height:25px;background:#cdc6ea"></div>
<div class="a" style="left:1080px;top:444px;width:1px;height:25px;background:#cdc6ea"></div>
<div class="a" style="left:1261px;top:444px;width:1px;height:25px;background:#cdc6ea"></div>
<div class="a" style="left:1442px;top:444px;width:1px;height:25px;background:#cdc6ea"></div>
<div class="a" style="left:1583px;top:444px;width:1px;height:25px;background:#cdc6ea"></div>
<div class="a" style="left:1624px;top:444px;width:1px;height:25px;background:#cdc6ea"></div>
<div class="a" style="left:1725px;top:444px;width:1px;height:25px;background:#cdc6ea"></div>
<div class="t" style="left:67px;top:444px;line-height:24px;height:24px;width:48px;overflow:hidden;text-align:right;font-size:12px;color:#3c2434"><span style="display:inline-block;transform:scaleX(0.917);transform-origin:100% 0">17</span></div>
<div class="t" style="left:120px;top:444px;line-height:24px;height:24px;width:218px;overflow:hidden;font-size:12px;color:#3c2434"><span style="display:inline-block;transform:scaleX(0.917);transform-origin:0 0">NBWASHINGTON CONTROLE DE PERMANENCIA</span></div>
<div class="t" style="left:442px;top:444px;line-height:24px;height:24px;width:33px;overflow:hidden;font-size:12px;color:#3c2434"><span style="display:inline-block;transform:scaleX(0.917);transform-origin:0 0">WAS</span></div>
<svg class="a" style="left:1670px;top:452px" width="9" height="9" viewBox="0 0 9 9"><path d="M0.9 3.6L3.4 7.2L8.2 1" fill="none" stroke="#3a7682" stroke-width="1.9"/></svg>
<div class="a" style="left:57px;top:469px;width:10px;height:25px;background:#f0f0f0;border-top:1px solid #fff;border-left:1px solid #fff;border-right:1px solid #000;border-bottom:1px solid #000"></div>
<div class="a" style="left:67px;top:469px;width:1659px;height:25px;background:#dff3fe"></div>
<div class="a" style="left:117px;top:469px;width:1px;height:25px;background:#cdc6ea"></div>
<div class="a" style="left:338px;top:469px;width:1px;height:25px;background:#cdc6ea"></div>
<div class="a" style="left:439px;top:469px;width:1px;height:25px;background:#cdc6ea"></div>
<div class="a" style="left:475px;top:469px;width:1px;height:25px;background:#cdc6ea"></div>
<div class="a" style="left:656px;top:469px;width:1px;height:25px;background:#cdc6ea"></div>
<div class="a" style="left:797px;top:469px;width:1px;height:25px;background:#cdc6ea"></div>
<div class="a" style="left:878px;top:469px;width:1px;height:25px;background:#cdc6ea"></div>
<div class="a" style="left:979px;top:469px;width:1px;height:25px;background:#cdc6ea"></div>
<div class="a" style="left:1080px;top:469px;width:1px;height:25px;background:#cdc6ea"></div>
<div class="a" style="left:1261px;top:469px;width:1px;height:25px;background:#cdc6ea"></div>
<div class="a" style="left:1442px;top:469px;width:1px;height:25px;background:#cdc6ea"></div>
<div class="a" style="left:1583px;top:469px;width:1px;height:25px;background:#cdc6ea"></div>
<div class="a" style="left:1624px;top:469px;width:1px;height:25px;background:#cdc6ea"></div>
<div class="a" style="left:1725px;top:469px;width:1px;height:25px;background:#cdc6ea"></div>
<div class="t" style="left:67px;top:469px;line-height:24px;height:24px;width:48px;overflow:hidden;text-align:right;font-size:12px;color:#3c2434"><span style="display:inline-block;transform:scaleX(0.917);transform-origin:100% 0">18</span></div>
<div class="t" style="left:120px;top:469px;line-height:24px;height:24px;width:218px;overflow:hidden;font-size:12px;color:#3c2434"><span style="display:inline-block;transform:scaleX(0.917);transform-origin:0 0">NBWASHINGTON SAT</span></div>
<div class="t" style="left:442px;top:469px;line-height:24px;height:24px;width:33px;overflow:hidden;font-size:12px;color:#3c2434"><span style="display:inline-block;transform:scaleX(0.917);transform-origin:0 0">TAN</span></div>
<svg class="a" style="left:1670px;top:477px" width="9" height="9" viewBox="0 0 9 9"><path d="M0.9 3.6L3.4 7.2L8.2 1" fill="none" stroke="#3a7682" stroke-width="1.9"/></svg>
<div class="a" style="left:57px;top:494px;width:10px;height:25px;background:#f0f0f0;border-top:1px solid #fff;border-left:1px solid #fff;border-right:1px solid #000;border-bottom:1px solid #000"></div>
<div class="a" style="left:67px;top:494px;width:1659px;height:25px;background:#ffffff"></div>
<div class="a" style="left:117px;top:494px;width:1px;height:25px;background:#cdc6ea"></div>
<div class="a" style="left:338px;top:494px;width:1px;height:25px;background:#cdc6ea"></div>
<div class="a" style="left:439px;top:494px;width:1px;height:25px;background:#cdc6ea"></div>
<div class="a" style="left:475px;top:494px;width:1px;height:25px;background:#cdc6ea"></div>
<div class="a" style="left:656px;top:494px;width:1px;height:25px;background:#cdc6ea"></div>
<div class="a" style="left:797px;top:494px;width:1px;height:25px;background:#cdc6ea"></div>
<div class="a" style="left:878px;top:494px;width:1px;height:25px;background:#cdc6ea"></div>
<div class="a" style="left:979px;top:494px;width:1px;height:25px;background:#cdc6ea"></div>
<div class="a" style="left:1080px;top:494px;width:1px;height:25px;background:#cdc6ea"></div>
<div class="a" style="left:1261px;top:494px;width:1px;height:25px;background:#cdc6ea"></div>
<div class="a" style="left:1442px;top:494px;width:1px;height:25px;background:#cdc6ea"></div>
<div class="a" style="left:1583px;top:494px;width:1px;height:25px;background:#cdc6ea"></div>
<div class="a" style="left:1624px;top:494px;width:1px;height:25px;background:#cdc6ea"></div>
<div class="a" style="left:1725px;top:494px;width:1px;height:25px;background:#cdc6ea"></div>
<div class="t" style="left:67px;top:494px;line-height:24px;height:24px;width:48px;overflow:hidden;text-align:right;font-size:12px;color:#3c2434"><span style="display:inline-block;transform:scaleX(0.917);transform-origin:100% 0">19</span></div>
<div class="t" style="left:120px;top:494px;line-height:24px;height:24px;width:218px;overflow:hidden;font-size:12px;color:#3c2434"><span style="display:inline-block;transform:scaleX(0.917);transform-origin:0 0">ELGIN LINKER SAT 2</span></div>
<div class="t" style="left:341px;top:494px;line-height:24px;height:24px;width:98px;overflow:hidden;font-size:12px;color:#3c2434"><span style="display:inline-block;transform:scaleX(0.917);transform-origin:0 0">MQMANGINO-NET</span></div>
<div class="t" style="left:442px;top:494px;line-height:24px;height:24px;width:33px;overflow:hidden;font-size:12px;color:#3c2434"><span style="display:inline-block;transform:scaleX(0.917);transform-origin:0 0">TAN</span></div>
<div class="t" style="left:1445px;top:494px;line-height:24px;height:24px;width:138px;overflow:hidden;font-size:12px;color:#3c2434"><span style="display:inline-block;transform:scaleX(0.917);transform-origin:0 0">900432</span></div>
<svg class="a" style="left:1670px;top:502px" width="9" height="9" viewBox="0 0 9 9"><path d="M0.9 3.6L3.4 7.2L8.2 1" fill="none" stroke="#3a7682" stroke-width="1.9"/></svg>
<div class="a" style="left:57px;top:519px;width:10px;height:25px;background:#f0f0f0;border-top:1px solid #fff;border-left:1px solid #fff;border-right:1px solid #000;border-bottom:1px solid #000"></div>
<div class="a" style="left:67px;top:519px;width:1659px;height:25px;background:#dff3fe"></div>
<div class="a" style="left:117px;top:519px;width:1px;height:25px;background:#cdc6ea"></div>
<div class="a" style="left:338px;top:519px;width:1px;height:25px;background:#cdc6ea"></div>
<div class="a" style="left:439px;top:519px;width:1px;height:25px;background:#cdc6ea"></div>
<div class="a" style="left:475px;top:519px;width:1px;height:25px;background:#cdc6ea"></div>
<div class="a" style="left:656px;top:519px;width:1px;height:25px;background:#cdc6ea"></div>
<div class="a" style="left:797px;top:519px;width:1px;height:25px;background:#cdc6ea"></div>
<div class="a" style="left:878px;top:519px;width:1px;height:25px;background:#cdc6ea"></div>
<div class="a" style="left:979px;top:519px;width:1px;height:25px;background:#cdc6ea"></div>
<div class="a" style="left:1080px;top:519px;width:1px;height:25px;background:#cdc6ea"></div>
<div class="a" style="left:1261px;top:519px;width:1px;height:25px;background:#cdc6ea"></div>
<div class="a" style="left:1442px;top:519px;width:1px;height:25px;background:#cdc6ea"></div>
<div class="a" style="left:1583px;top:519px;width:1px;height:25px;background:#cdc6ea"></div>
<div class="a" style="left:1624px;top:519px;width:1px;height:25px;background:#cdc6ea"></div>
<div class="a" style="left:1725px;top:519px;width:1px;height:25px;background:#cdc6ea"></div>
<div class="t" style="left:67px;top:519px;line-height:24px;height:24px;width:48px;overflow:hidden;text-align:right;font-size:12px;color:#3c2434"><span style="display:inline-block;transform:scaleX(0.917);transform-origin:100% 0">21</span></div>
<div class="t" style="left:120px;top:519px;line-height:24px;height:24px;width:218px;overflow:hidden;font-size:12px;color:#3c2434"><span style="display:inline-block;transform:scaleX(0.917);transform-origin:0 0">TERMINAL 2</span></div>
<div class="t" style="left:341px;top:519px;line-height:24px;height:24px;width:98px;overflow:hidden;font-size:12px;color:#3c2434"><span style="display:inline-block;transform:scaleX(0.917);transform-origin:0 0">NBTASSIO</span></div>
<div class="t" style="left:442px;top:519px;line-height:24px;height:24px;width:33px;overflow:hidden;font-size:12px;color:#3c2434"><span style="display:inline-block;transform:scaleX(0.917);transform-origin:0 0">NFE</span></div>
<svg class="a" style="left:1670px;top:527px" width="9" height="9" viewBox="0 0 9 9"><path d="M0.9 3.6L3.4 7.2L8.2 1" fill="none" stroke="#3a7682" stroke-width="1.9"/></svg>
<div class="a" style="left:57px;top:544px;width:10px;height:25px;background:#f0f0f0;border-top:1px solid #fff;border-left:1px solid #fff;border-right:1px solid #000;border-bottom:1px solid #000"></div>
<div class="a" style="left:67px;top:544px;width:1659px;height:25px;background:#ffffff"></div>
<div class="a" style="left:117px;top:544px;width:1px;height:25px;background:#cdc6ea"></div>
<div class="a" style="left:338px;top:544px;width:1px;height:25px;background:#cdc6ea"></div>
<div class="a" style="left:439px;top:544px;width:1px;height:25px;background:#cdc6ea"></div>
<div class="a" style="left:475px;top:544px;width:1px;height:25px;background:#cdc6ea"></div>
<div class="a" style="left:656px;top:544px;width:1px;height:25px;background:#cdc6ea"></div>
<div class="a" style="left:797px;top:544px;width:1px;height:25px;background:#cdc6ea"></div>
<div class="a" style="left:878px;top:544px;width:1px;height:25px;background:#cdc6ea"></div>
<div class="a" style="left:979px;top:544px;width:1px;height:25px;background:#cdc6ea"></div>
<div class="a" style="left:1080px;top:544px;width:1px;height:25px;background:#cdc6ea"></div>
<div class="a" style="left:1261px;top:544px;width:1px;height:25px;background:#cdc6ea"></div>
<div class="a" style="left:1442px;top:544px;width:1px;height:25px;background:#cdc6ea"></div>
<div class="a" style="left:1583px;top:544px;width:1px;height:25px;background:#cdc6ea"></div>
<div class="a" style="left:1624px;top:544px;width:1px;height:25px;background:#cdc6ea"></div>
<div class="a" style="left:1725px;top:544px;width:1px;height:25px;background:#cdc6ea"></div>
<div class="t" style="left:67px;top:544px;line-height:24px;height:24px;width:48px;overflow:hidden;text-align:right;font-size:12px;color:#3c2434"><span style="display:inline-block;transform:scaleX(0.917);transform-origin:100% 0">22</span></div>
<div class="t" style="left:120px;top:544px;line-height:24px;height:24px;width:218px;overflow:hidden;font-size:12px;color:#3c2434"><span style="display:inline-block;transform:scaleX(0.917);transform-origin:0 0">SAT EPSON</span></div>
<div class="t" style="left:442px;top:544px;line-height:24px;height:24px;width:33px;overflow:hidden;font-size:12px;color:#3c2434"><span style="display:inline-block;transform:scaleX(0.917);transform-origin:0 0">EPS</span></div>
<svg class="a" style="left:1670px;top:552px" width="9" height="9" viewBox="0 0 9 9"><path d="M0.9 3.6L3.4 7.2L8.2 1" fill="none" stroke="#3a7682" stroke-width="1.9"/></svg>
<div class="a" style="left:57px;top:569px;width:10px;height:25px;background:#f0f0f0;border-top:1px solid #fff;border-left:1px solid #fff;border-right:1px solid #000;border-bottom:1px solid #000"></div>
<div class="a" style="left:67px;top:569px;width:1659px;height:25px;background:#dff3fe"></div>
<div class="a" style="left:117px;top:569px;width:1px;height:25px;background:#cdc6ea"></div>
<div class="a" style="left:338px;top:569px;width:1px;height:25px;background:#cdc6ea"></div>
<div class="a" style="left:439px;top:569px;width:1px;height:25px;background:#cdc6ea"></div>
<div class="a" style="left:475px;top:569px;width:1px;height:25px;background:#cdc6ea"></div>
<div class="a" style="left:656px;top:569px;width:1px;height:25px;background:#cdc6ea"></div>
<div class="a" style="left:797px;top:569px;width:1px;height:25px;background:#cdc6ea"></div>
<div class="a" style="left:878px;top:569px;width:1px;height:25px;background:#cdc6ea"></div>
<div class="a" style="left:979px;top:569px;width:1px;height:25px;background:#cdc6ea"></div>
<div class="a" style="left:1080px;top:569px;width:1px;height:25px;background:#cdc6ea"></div>
<div class="a" style="left:1261px;top:569px;width:1px;height:25px;background:#cdc6ea"></div>
<div class="a" style="left:1442px;top:569px;width:1px;height:25px;background:#cdc6ea"></div>
<div class="a" style="left:1583px;top:569px;width:1px;height:25px;background:#cdc6ea"></div>
<div class="a" style="left:1624px;top:569px;width:1px;height:25px;background:#cdc6ea"></div>
<div class="a" style="left:1725px;top:569px;width:1px;height:25px;background:#cdc6ea"></div>
<div class="t" style="left:67px;top:569px;line-height:24px;height:24px;width:48px;overflow:hidden;text-align:right;font-size:12px;color:#3c2434"><span style="display:inline-block;transform:scaleX(0.917);transform-origin:100% 0">23</span></div>
<div class="t" style="left:120px;top:569px;line-height:24px;height:24px;width:218px;overflow:hidden;font-size:12px;color:#3c2434"><span style="display:inline-block;transform:scaleX(0.917);transform-origin:0 0">ELGIN MFE</span></div>
<div class="t" style="left:341px;top:569px;line-height:24px;height:24px;width:98px;overflow:hidden;font-size:12px;color:#3c2434"><span style="display:inline-block;transform:scaleX(0.917);transform-origin:0 0">NBFERREIRA</span></div>
<div class="t" style="left:442px;top:569px;line-height:24px;height:24px;width:33px;overflow:hidden;font-size:12px;color:#3c2434"><span style="display:inline-block;transform:scaleX(0.917);transform-origin:0 0">ELG</span></div>
<div class="a" style="left:57px;top:594px;width:10px;height:25px;background:#f0f0f0;border-top:1px solid #fff;border-left:1px solid #fff;border-right:1px solid #000;border-bottom:1px solid #000"></div>
<div class="a" style="left:67px;top:594px;width:1659px;height:25px;background:#ffffff"></div>
<div class="a" style="left:117px;top:594px;width:1px;height:25px;background:#cdc6ea"></div>
<div class="a" style="left:338px;top:594px;width:1px;height:25px;background:#cdc6ea"></div>
<div class="a" style="left:439px;top:594px;width:1px;height:25px;background:#cdc6ea"></div>
<div class="a" style="left:475px;top:594px;width:1px;height:25px;background:#cdc6ea"></div>
<div class="a" style="left:656px;top:594px;width:1px;height:25px;background:#cdc6ea"></div>
<div class="a" style="left:797px;top:594px;width:1px;height:25px;background:#cdc6ea"></div>
<div class="a" style="left:878px;top:594px;width:1px;height:25px;background:#cdc6ea"></div>
<div class="a" style="left:979px;top:594px;width:1px;height:25px;background:#cdc6ea"></div>
<div class="a" style="left:1080px;top:594px;width:1px;height:25px;background:#cdc6ea"></div>
<div class="a" style="left:1261px;top:594px;width:1px;height:25px;background:#cdc6ea"></div>
<div class="a" style="left:1442px;top:594px;width:1px;height:25px;background:#cdc6ea"></div>
<div class="a" style="left:1583px;top:594px;width:1px;height:25px;background:#cdc6ea"></div>
<div class="a" style="left:1624px;top:594px;width:1px;height:25px;background:#cdc6ea"></div>
<div class="a" style="left:1725px;top:594px;width:1px;height:25px;background:#cdc6ea"></div>
<div class="t" style="left:67px;top:594px;line-height:24px;height:24px;width:48px;overflow:hidden;text-align:right;font-size:12px;color:#3c2434"><span style="display:inline-block;transform:scaleX(0.917);transform-origin:100% 0">24</span></div>
<div class="t" style="left:120px;top:594px;line-height:24px;height:24px;width:218px;overflow:hidden;font-size:12px;color:#3c2434"><span style="display:inline-block;transform:scaleX(0.917);transform-origin:0 0">TERMINAL TESTE MFE TANCA</span></div>
<div class="t" style="left:341px;top:594px;line-height:24px;height:24px;width:98px;overflow:hidden;font-size:12px;color:#3c2434"><span style="display:inline-block;transform:scaleX(0.917);transform-origin:0 0">NBWILLIAM</span></div>
<div class="t" style="left:442px;top:594px;line-height:24px;height:24px;width:33px;overflow:hidden;font-size:12px;color:#3c2434"><span style="display:inline-block;transform:scaleX(0.917);transform-origin:0 0">TAN</span></div>
<svg class="a" style="left:1670px;top:602px" width="9" height="9" viewBox="0 0 9 9"><path d="M0.9 3.6L3.4 7.2L8.2 1" fill="none" stroke="#3a7682" stroke-width="1.9"/></svg>
<div class="a" style="left:57px;top:619px;width:10px;height:25px;background:#f0f0f0;border-top:1px solid #fff;border-left:1px solid #fff;border-right:1px solid #000;border-bottom:1px solid #000"></div>
<div class="a" style="left:67px;top:619px;width:1659px;height:25px;background:#dff3fe"></div>
<div class="a" style="left:117px;top:619px;width:1px;height:25px;background:#cdc6ea"></div>
<div class="a" style="left:338px;top:619px;width:1px;height:25px;background:#cdc6ea"></div>
<div class="a" style="left:439px;top:619px;width:1px;height:25px;background:#cdc6ea"></div>
<div class="a" style="left:475px;top:619px;width:1px;height:25px;background:#cdc6ea"></div>
<div class="a" style="left:656px;top:619px;width:1px;height:25px;background:#cdc6ea"></div>
<div class="a" style="left:797px;top:619px;width:1px;height:25px;background:#cdc6ea"></div>
<div class="a" style="left:878px;top:619px;width:1px;height:25px;background:#cdc6ea"></div>
<div class="a" style="left:979px;top:619px;width:1px;height:25px;background:#cdc6ea"></div>
<div class="a" style="left:1080px;top:619px;width:1px;height:25px;background:#cdc6ea"></div>
<div class="a" style="left:1261px;top:619px;width:1px;height:25px;background:#cdc6ea"></div>
<div class="a" style="left:1442px;top:619px;width:1px;height:25px;background:#cdc6ea"></div>
<div class="a" style="left:1583px;top:619px;width:1px;height:25px;background:#cdc6ea"></div>
<div class="a" style="left:1624px;top:619px;width:1px;height:25px;background:#cdc6ea"></div>
<div class="a" style="left:1725px;top:619px;width:1px;height:25px;background:#cdc6ea"></div>
<div class="t" style="left:67px;top:619px;line-height:24px;height:24px;width:48px;overflow:hidden;text-align:right;font-size:12px;color:#3c2434"><span style="display:inline-block;transform:scaleX(0.917);transform-origin:100% 0">25</span></div>
<div class="t" style="left:120px;top:619px;line-height:24px;height:24px;width:218px;overflow:hidden;font-size:12px;color:#3c2434"><span style="display:inline-block;transform:scaleX(0.917);transform-origin:0 0">TERMINAL TOTEM</span></div>
<div class="t" style="left:442px;top:619px;line-height:24px;height:24px;width:33px;overflow:hidden;font-size:12px;color:#3c2434"><span style="display:inline-block;transform:scaleX(0.917);transform-origin:0 0">01</span></div>
<svg class="a" style="left:1600px;top:627px" width="9" height="9" viewBox="0 0 9 9"><path d="M0.9 3.6L3.4 7.2L8.2 1" fill="none" stroke="#3a7682" stroke-width="1.9"/></svg>
<div class="a" style="left:57px;top:644px;width:10px;height:25px;background:#f0f0f0;border-top:1px solid #fff;border-left:1px solid #fff;border-right:1px solid #000;border-bottom:1px solid #000"></div>
<div class="a" style="left:67px;top:644px;width:1659px;height:25px;background:#ffffff"></div>
<div class="a" style="left:117px;top:644px;width:1px;height:25px;background:#cdc6ea"></div>
<div class="a" style="left:338px;top:644px;width:1px;height:25px;background:#cdc6ea"></div>
<div class="a" style="left:439px;top:644px;width:1px;height:25px;background:#cdc6ea"></div>
<div class="a" style="left:475px;top:644px;width:1px;height:25px;background:#cdc6ea"></div>
<div class="a" style="left:656px;top:644px;width:1px;height:25px;background:#cdc6ea"></div>
<div class="a" style="left:797px;top:644px;width:1px;height:25px;background:#cdc6ea"></div>
<div class="a" style="left:878px;top:644px;width:1px;height:25px;background:#cdc6ea"></div>
<div class="a" style="left:979px;top:644px;width:1px;height:25px;background:#cdc6ea"></div>
<div class="a" style="left:1080px;top:644px;width:1px;height:25px;background:#cdc6ea"></div>
<div class="a" style="left:1261px;top:644px;width:1px;height:25px;background:#cdc6ea"></div>
<div class="a" style="left:1442px;top:644px;width:1px;height:25px;background:#cdc6ea"></div>
<div class="a" style="left:1583px;top:644px;width:1px;height:25px;background:#cdc6ea"></div>
<div class="a" style="left:1624px;top:644px;width:1px;height:25px;background:#cdc6ea"></div>
<div class="a" style="left:1725px;top:644px;width:1px;height:25px;background:#cdc6ea"></div>
<div class="t" style="left:67px;top:644px;line-height:24px;height:24px;width:48px;overflow:hidden;text-align:right;font-size:12px;color:#3c2434"><span style="display:inline-block;transform:scaleX(0.917);transform-origin:100% 0">26</span></div>
<div class="t" style="left:120px;top:644px;line-height:24px;height:24px;width:218px;overflow:hidden;font-size:12px;color:#3c2434"><span style="display:inline-block;transform:scaleX(0.917);transform-origin:0 0">SAT BEMATECH</span></div>
<div class="t" style="left:442px;top:644px;line-height:24px;height:24px;width:33px;overflow:hidden;font-size:12px;color:#3c2434"><span style="display:inline-block;transform:scaleX(0.917);transform-origin:0 0">BMT</span></div>
<svg class="a" style="left:1600px;top:652px" width="9" height="9" viewBox="0 0 9 9"><path d="M0.9 3.6L3.4 7.2L8.2 1" fill="none" stroke="#3a7682" stroke-width="1.9"/></svg>
<div class="a" style="left:57px;top:669px;width:10px;height:25px;background:#f0f0f0;border-top:1px solid #fff;border-left:1px solid #fff;border-right:1px solid #000;border-bottom:1px solid #000"></div>
<div class="a" style="left:67px;top:669px;width:1659px;height:25px;background:#dff3fe"></div>
<div class="a" style="left:117px;top:669px;width:1px;height:25px;background:#cdc6ea"></div>
<div class="a" style="left:338px;top:669px;width:1px;height:25px;background:#cdc6ea"></div>
<div class="a" style="left:439px;top:669px;width:1px;height:25px;background:#cdc6ea"></div>
<div class="a" style="left:475px;top:669px;width:1px;height:25px;background:#cdc6ea"></div>
<div class="a" style="left:656px;top:669px;width:1px;height:25px;background:#cdc6ea"></div>
<div class="a" style="left:797px;top:669px;width:1px;height:25px;background:#cdc6ea"></div>
<div class="a" style="left:878px;top:669px;width:1px;height:25px;background:#cdc6ea"></div>
<div class="a" style="left:979px;top:669px;width:1px;height:25px;background:#cdc6ea"></div>
<div class="a" style="left:1080px;top:669px;width:1px;height:25px;background:#cdc6ea"></div>
<div class="a" style="left:1261px;top:669px;width:1px;height:25px;background:#cdc6ea"></div>
<div class="a" style="left:1442px;top:669px;width:1px;height:25px;background:#cdc6ea"></div>
<div class="a" style="left:1583px;top:669px;width:1px;height:25px;background:#cdc6ea"></div>
<div class="a" style="left:1624px;top:669px;width:1px;height:25px;background:#cdc6ea"></div>
<div class="a" style="left:1725px;top:669px;width:1px;height:25px;background:#cdc6ea"></div>
<div class="t" style="left:67px;top:669px;line-height:24px;height:24px;width:48px;overflow:hidden;text-align:right;font-size:12px;color:#3c2434"><span style="display:inline-block;transform:scaleX(0.917);transform-origin:100% 0">28</span></div>
<div class="t" style="left:120px;top:669px;line-height:24px;height:24px;width:218px;overflow:hidden;font-size:12px;color:#3c2434"><span style="display:inline-block;transform:scaleX(0.917);transform-origin:0 0">NÃO FISCAL - TÁSSIO - NÃO USAR</span></div>
<div class="t" style="left:341px;top:669px;line-height:24px;height:24px;width:98px;overflow:hidden;font-size:12px;color:#3c2434"><span style="display:inline-block;transform:scaleX(0.917);transform-origin:0 0">NBTASSIO</span></div>
<div class="t" style="left:442px;top:669px;line-height:24px;height:24px;width:33px;overflow:hidden;font-size:12px;color:#3c2434"><span style="display:inline-block;transform:scaleX(0.917);transform-origin:0 0">OT2</span></div>
<svg class="a" style="left:1670px;top:677px" width="9" height="9" viewBox="0 0 9 9"><path d="M0.9 3.6L3.4 7.2L8.2 1" fill="none" stroke="#3a7682" stroke-width="1.9"/></svg>
<div class="a" style="left:57px;top:694px;width:10px;height:25px;background:#f0f0f0;border-top:1px solid #fff;border-left:1px solid #fff;border-right:1px solid #000;border-bottom:1px solid #000"></div>
<div class="a" style="left:67px;top:694px;width:1659px;height:25px;background:#ffffff"></div>
<div class="a" style="left:117px;top:694px;width:1px;height:25px;background:#cdc6ea"></div>
<div class="a" style="left:338px;top:694px;width:1px;height:25px;background:#cdc6ea"></div>
<div class="a" style="left:439px;top:694px;width:1px;height:25px;background:#cdc6ea"></div>
<div class="a" style="left:475px;top:694px;width:1px;height:25px;background:#cdc6ea"></div>
<div class="a" style="left:656px;top:694px;width:1px;height:25px;background:#cdc6ea"></div>
<div class="a" style="left:797px;top:694px;width:1px;height:25px;background:#cdc6ea"></div>
<div class="a" style="left:878px;top:694px;width:1px;height:25px;background:#cdc6ea"></div>
<div class="a" style="left:979px;top:694px;width:1px;height:25px;background:#cdc6ea"></div>
<div class="a" style="left:1080px;top:694px;width:1px;height:25px;background:#cdc6ea"></div>
<div class="a" style="left:1261px;top:694px;width:1px;height:25px;background:#cdc6ea"></div>
<div class="a" style="left:1442px;top:694px;width:1px;height:25px;background:#cdc6ea"></div>
<div class="a" style="left:1583px;top:694px;width:1px;height:25px;background:#cdc6ea"></div>
<div class="a" style="left:1624px;top:694px;width:1px;height:25px;background:#cdc6ea"></div>
<div class="a" style="left:1725px;top:694px;width:1px;height:25px;background:#cdc6ea"></div>
<div class="t" style="left:67px;top:694px;line-height:24px;height:24px;width:48px;overflow:hidden;text-align:right;font-size:12px;color:#3c2434"><span style="display:inline-block;transform:scaleX(0.917);transform-origin:100% 0">29</span></div>
<div class="t" style="left:120px;top:694px;line-height:24px;height:24px;width:218px;overflow:hidden;font-size:12px;color:#3c2434"><span style="display:inline-block;transform:scaleX(0.917);transform-origin:0 0">TERMINAL AUXILIAR</span></div>
<div class="t" style="left:442px;top:694px;line-height:24px;height:24px;width:33px;overflow:hidden;font-size:12px;color:#3c2434"><span style="display:inline-block;transform:scaleX(0.917);transform-origin:0 0">OT2</span></div>
<div class="a" style="left:57px;top:719px;width:10px;height:25px;background:#f0f0f0;border-top:1px solid #fff;border-left:1px solid #fff;border-right:1px solid #000;border-bottom:1px solid #000"></div>
<div class="a" style="left:67px;top:719px;width:1659px;height:25px;background:#dff3fe"></div>
<div class="a" style="left:117px;top:719px;width:1px;height:25px;background:#cdc6ea"></div>
<div class="a" style="left:338px;top:719px;width:1px;height:25px;background:#cdc6ea"></div>
<div class="a" style="left:439px;top:719px;width:1px;height:25px;background:#cdc6ea"></div>
<div class="a" style="left:475px;top:719px;width:1px;height:25px;background:#cdc6ea"></div>
<div class="a" style="left:656px;top:719px;width:1px;height:25px;background:#cdc6ea"></div>
<div class="a" style="left:797px;top:719px;width:1px;height:25px;background:#cdc6ea"></div>
<div class="a" style="left:878px;top:719px;width:1px;height:25px;background:#cdc6ea"></div>
<div class="a" style="left:979px;top:719px;width:1px;height:25px;background:#cdc6ea"></div>
<div class="a" style="left:1080px;top:719px;width:1px;height:25px;background:#cdc6ea"></div>
<div class="a" style="left:1261px;top:719px;width:1px;height:25px;background:#cdc6ea"></div>
<div class="a" style="left:1442px;top:719px;width:1px;height:25px;background:#cdc6ea"></div>
<div class="a" style="left:1583px;top:719px;width:1px;height:25px;background:#cdc6ea"></div>
<div class="a" style="left:1624px;top:719px;width:1px;height:25px;background:#cdc6ea"></div>
<div class="a" style="left:1725px;top:719px;width:1px;height:25px;background:#cdc6ea"></div>
<div class="t" style="left:67px;top:719px;line-height:24px;height:24px;width:48px;overflow:hidden;text-align:right;font-size:12px;color:#3c2434"><span style="display:inline-block;transform:scaleX(0.917);transform-origin:100% 0">30</span></div>
<div class="t" style="left:120px;top:719px;line-height:24px;height:24px;width:218px;overflow:hidden;font-size:12px;color:#3c2434"><span style="display:inline-block;transform:scaleX(0.917);transform-origin:0 0">GUSTAVO TERM.</span></div>
<div class="t" style="left:442px;top:719px;line-height:24px;height:24px;width:33px;overflow:hidden;font-size:12px;color:#3c2434"><span style="display:inline-block;transform:scaleX(0.917);transform-origin:0 0">NFE</span></div>
<div class="a" style="left:57px;top:744px;width:10px;height:25px;background:#f0f0f0;border-top:1px solid #fff;border-left:1px solid #fff;border-right:1px solid #000;border-bottom:1px solid #000"></div>
<div class="a" style="left:67px;top:744px;width:1659px;height:25px;background:#ffffff"></div>
<div class="a" style="left:117px;top:744px;width:1px;height:25px;background:#cdc6ea"></div>
<div class="a" style="left:338px;top:744px;width:1px;height:25px;background:#cdc6ea"></div>
<div class="a" style="left:439px;top:744px;width:1px;height:25px;background:#cdc6ea"></div>
<div class="a" style="left:475px;top:744px;width:1px;height:25px;background:#cdc6ea"></div>
<div class="a" style="left:656px;top:744px;width:1px;height:25px;background:#cdc6ea"></div>
<div class="a" style="left:797px;top:744px;width:1px;height:25px;background:#cdc6ea"></div>
<div class="a" style="left:878px;top:744px;width:1px;height:25px;background:#cdc6ea"></div>
<div class="a" style="left:979px;top:744px;width:1px;height:25px;background:#cdc6ea"></div>
<div class="a" style="left:1080px;top:744px;width:1px;height:25px;background:#cdc6ea"></div>
<div class="a" style="left:1261px;top:744px;width:1px;height:25px;background:#cdc6ea"></div>
<div class="a" style="left:1442px;top:744px;width:1px;height:25px;background:#cdc6ea"></div>
<div class="a" style="left:1583px;top:744px;width:1px;height:25px;background:#cdc6ea"></div>
<div class="a" style="left:1624px;top:744px;width:1px;height:25px;background:#cdc6ea"></div>
<div class="a" style="left:1725px;top:744px;width:1px;height:25px;background:#cdc6ea"></div>
<div class="t" style="left:67px;top:744px;line-height:24px;height:24px;width:48px;overflow:hidden;text-align:right;font-size:12px;color:#3c2434"><span style="display:inline-block;transform:scaleX(0.917);transform-origin:100% 0">31</span></div>
<div class="t" style="left:120px;top:744px;line-height:24px;height:24px;width:218px;overflow:hidden;font-size:12px;color:#3c2434"><span style="display:inline-block;transform:scaleX(0.917);transform-origin:0 0">MICROTERMINAL WASH</span></div>
<div class="t" style="left:442px;top:744px;line-height:24px;height:24px;width:33px;overflow:hidden;font-size:12px;color:#3c2434"><span style="display:inline-block;transform:scaleX(0.917);transform-origin:0 0">WAS</span></div>
<div class="a" style="left:57px;top:769px;width:10px;height:25px;background:#f0f0f0;border-top:1px solid #fff;border-left:1px solid #fff;border-right:1px solid #000;border-bottom:1px solid #000"></div>
<div class="a" style="left:67px;top:769px;width:1659px;height:25px;background:#dff3fe"></div>
<div class="a" style="left:117px;top:769px;width:1px;height:25px;background:#cdc6ea"></div>
<div class="a" style="left:338px;top:769px;width:1px;height:25px;background:#cdc6ea"></div>
<div class="a" style="left:439px;top:769px;width:1px;height:25px;background:#cdc6ea"></div>
<div class="a" style="left:475px;top:769px;width:1px;height:25px;background:#cdc6ea"></div>
<div class="a" style="left:656px;top:769px;width:1px;height:25px;background:#cdc6ea"></div>
<div class="a" style="left:797px;top:769px;width:1px;height:25px;background:#cdc6ea"></div>
<div class="a" style="left:878px;top:769px;width:1px;height:25px;background:#cdc6ea"></div>
<div class="a" style="left:979px;top:769px;width:1px;height:25px;background:#cdc6ea"></div>
<div class="a" style="left:1080px;top:769px;width:1px;height:25px;background:#cdc6ea"></div>
<div class="a" style="left:1261px;top:769px;width:1px;height:25px;background:#cdc6ea"></div>
<div class="a" style="left:1442px;top:769px;width:1px;height:25px;background:#cdc6ea"></div>
<div class="a" style="left:1583px;top:769px;width:1px;height:25px;background:#cdc6ea"></div>
<div class="a" style="left:1624px;top:769px;width:1px;height:25px;background:#cdc6ea"></div>
<div class="a" style="left:1725px;top:769px;width:1px;height:25px;background:#cdc6ea"></div>
<div class="t" style="left:67px;top:769px;line-height:24px;height:24px;width:48px;overflow:hidden;text-align:right;font-size:12px;color:#3c2434"><span style="display:inline-block;transform:scaleX(0.917);transform-origin:100% 0">32</span></div>
<div class="t" style="left:120px;top:769px;line-height:24px;height:24px;width:218px;overflow:hidden;font-size:12px;color:#3c2434"><span style="display:inline-block;transform:scaleX(0.917);transform-origin:0 0">TESTE MICROTERMINAL</span></div>
<div class="t" style="left:442px;top:769px;line-height:24px;height:24px;width:33px;overflow:hidden;font-size:12px;color:#3c2434"><span style="display:inline-block;transform:scaleX(0.917);transform-origin:0 0">MAN</span></div>
<div class="a" style="left:57px;top:794px;width:10px;height:25px;background:#f0f0f0;border-top:1px solid #fff;border-left:1px solid #fff;border-right:1px solid #000;border-bottom:1px solid #000"></div>
<div class="a" style="left:67px;top:794px;width:1659px;height:25px;background:#ffffff"></div>
<div class="a" style="left:117px;top:794px;width:1px;height:25px;background:#cdc6ea"></div>
<div class="a" style="left:338px;top:794px;width:1px;height:25px;background:#cdc6ea"></div>
<div class="a" style="left:439px;top:794px;width:1px;height:25px;background:#cdc6ea"></div>
<div class="a" style="left:475px;top:794px;width:1px;height:25px;background:#cdc6ea"></div>
<div class="a" style="left:656px;top:794px;width:1px;height:25px;background:#cdc6ea"></div>
<div class="a" style="left:797px;top:794px;width:1px;height:25px;background:#cdc6ea"></div>
<div class="a" style="left:878px;top:794px;width:1px;height:25px;background:#cdc6ea"></div>
<div class="a" style="left:979px;top:794px;width:1px;height:25px;background:#cdc6ea"></div>
<div class="a" style="left:1080px;top:794px;width:1px;height:25px;background:#cdc6ea"></div>
<div class="a" style="left:1261px;top:794px;width:1px;height:25px;background:#cdc6ea"></div>
<div class="a" style="left:1442px;top:794px;width:1px;height:25px;background:#cdc6ea"></div>
<div class="a" style="left:1583px;top:794px;width:1px;height:25px;background:#cdc6ea"></div>
<div class="a" style="left:1624px;top:794px;width:1px;height:25px;background:#cdc6ea"></div>
<div class="a" style="left:1725px;top:794px;width:1px;height:25px;background:#cdc6ea"></div>
<div class="t" style="left:67px;top:794px;line-height:24px;height:24px;width:48px;overflow:hidden;text-align:right;font-size:12px;color:#3c2434"><span style="display:inline-block;transform:scaleX(0.917);transform-origin:100% 0">33</span></div>
<div class="t" style="left:120px;top:794px;line-height:24px;height:24px;width:218px;overflow:hidden;font-size:12px;color:#3c2434"><span style="display:inline-block;transform:scaleX(0.917);transform-origin:0 0">TERMINAL NFC-E DO FERREIRA (NAO USAR)</span></div>
<div class="t" style="left:341px;top:794px;line-height:24px;height:24px;width:98px;overflow:hidden;font-size:12px;color:#3c2434"><span style="display:inline-block;transform:scaleX(0.917);transform-origin:0 0">NBFERREIRA</span></div>
<div class="t" style="left:442px;top:794px;line-height:24px;height:24px;width:33px;overflow:hidden;font-size:12px;color:#3c2434"><span style="display:inline-block;transform:scaleX(0.917);transform-origin:0 0">MAN</span></div>
<div class="t" style="left:659px;top:794px;line-height:24px;height:24px;width:138px;overflow:hidden;font-size:12px;color:#3c2434"><span style="display:inline-block;transform:scaleX(0.917);transform-origin:0 0">VIXEN PDV NAO FISCAL</span></div>
<div class="t" style="left:881px;top:794px;line-height:24px;height:24px;width:98px;overflow:hidden;font-size:12px;color:#3c2434"><span style="display:inline-block;transform:scaleX(0.917);transform-origin:0 0">LJ1</span></div>
<div class="t" style="left:982px;top:794px;line-height:24px;height:24px;width:98px;overflow:hidden;font-size:12px;color:#3c2434"><span style="display:inline-block;transform:scaleX(0.917);transform-origin:0 0">CONTA DO FERREIRA</span></div>
<div class="a" style="left:57px;top:819px;width:10px;height:25px;background:#f0f0f0;border-top:1px solid #fff;border-left:1px solid #fff;border-right:1px solid #000;border-bottom:1px solid #000"></div>
<div class="a" style="left:67px;top:819px;width:1659px;height:25px;background:#dff3fe"></div>
<div class="a" style="left:117px;top:819px;width:1px;height:25px;background:#cdc6ea"></div>
<div class="a" style="left:338px;top:819px;width:1px;height:25px;background:#cdc6ea"></div>
<div class="a" style="left:439px;top:819px;width:1px;height:25px;background:#cdc6ea"></div>
<div class="a" style="left:475px;top:819px;width:1px;height:25px;background:#cdc6ea"></div>
<div class="a" style="left:656px;top:819px;width:1px;height:25px;background:#cdc6ea"></div>
<div class="a" style="left:797px;top:819px;width:1px;height:25px;background:#cdc6ea"></div>
<div class="a" style="left:878px;top:819px;width:1px;height:25px;background:#cdc6ea"></div>
<div class="a" style="left:979px;top:819px;width:1px;height:25px;background:#cdc6ea"></div>
<div class="a" style="left:1080px;top:819px;width:1px;height:25px;background:#cdc6ea"></div>
<div class="a" style="left:1261px;top:819px;width:1px;height:25px;background:#cdc6ea"></div>
<div class="a" style="left:1442px;top:819px;width:1px;height:25px;background:#cdc6ea"></div>
<div class="a" style="left:1583px;top:819px;width:1px;height:25px;background:#cdc6ea"></div>
<div class="a" style="left:1624px;top:819px;width:1px;height:25px;background:#cdc6ea"></div>
<div class="a" style="left:1725px;top:819px;width:1px;height:25px;background:#cdc6ea"></div>
<div class="t" style="left:67px;top:819px;line-height:24px;height:24px;width:48px;overflow:hidden;text-align:right;font-size:12px;color:#3c2434"><span style="display:inline-block;transform:scaleX(0.917);transform-origin:100% 0">37</span></div>
<div class="t" style="left:120px;top:819px;line-height:24px;height:24px;width:218px;overflow:hidden;font-size:12px;color:#3c2434"><span style="display:inline-block;transform:scaleX(0.917);transform-origin:0 0">TERMINAL GUSTAVO 2 (NÃO FISCAL)</span></div>
<div class="t" style="left:341px;top:819px;line-height:24px;height:24px;width:98px;overflow:hidden;font-size:12px;color:#3c2434"><span style="display:inline-block;transform:scaleX(0.917);transform-origin:0 0">NBGUSTAVO</span></div>
<div class="t" style="left:442px;top:819px;line-height:24px;height:24px;width:33px;overflow:hidden;font-size:12px;color:#3c2434"><span style="display:inline-block;transform:scaleX(0.917);transform-origin:0 0">OT2</span></div>
<div class="t" style="left:478px;top:819px;line-height:24px;height:24px;width:178px;overflow:hidden;font-size:12px;color:#3c2434"><span style="display:inline-block;transform:scaleX(0.917);transform-origin:0 0">GRUPO FAVORITOS</span></div>
<div class="t" style="left:659px;top:819px;line-height:24px;height:24px;width:138px;overflow:hidden;font-size:12px;color:#3c2434"><span style="display:inline-block;transform:scaleX(0.917);transform-origin:0 0">VIXEN PDV NAO FISCAL</span></div>
<div class="t" style="left:881px;top:819px;line-height:24px;height:24px;width:98px;overflow:hidden;font-size:12px;color:#3c2434"><span style="display:inline-block;transform:scaleX(0.917);transform-origin:0 0">GER</span></div>
<div class="t" style="left:982px;top:819px;line-height:24px;height:24px;width:98px;overflow:hidden;font-size:12px;color:#3c2434"><span style="display:inline-block;transform:scaleX(0.917);transform-origin:0 0">CONTA CX 2</span></div>
<svg class="a" style="left:1670px;top:827px" width="9" height="9" viewBox="0 0 9 9"><path d="M0.9 3.6L3.4 7.2L8.2 1" fill="none" stroke="#3a7682" stroke-width="1.9"/></svg>
<div class="a" style="left:57px;top:844px;width:10px;height:25px;background:#f0f0f0;border-top:1px solid #fff;border-left:1px solid #fff;border-right:1px solid #000;border-bottom:1px solid #000"></div>
<div class="a" style="left:67px;top:844px;width:1659px;height:25px;background:#ffffff"></div>
<div class="a" style="left:117px;top:844px;width:1px;height:25px;background:#cdc6ea"></div>
<div class="a" style="left:338px;top:844px;width:1px;height:25px;background:#cdc6ea"></div>
<div class="a" style="left:439px;top:844px;width:1px;height:25px;background:#cdc6ea"></div>
<div class="a" style="left:475px;top:844px;width:1px;height:25px;background:#cdc6ea"></div>
<div class="a" style="left:656px;top:844px;width:1px;height:25px;background:#cdc6ea"></div>
<div class="a" style="left:797px;top:844px;width:1px;height:25px;background:#cdc6ea"></div>
<div class="a" style="left:878px;top:844px;width:1px;height:25px;background:#cdc6ea"></div>
<div class="a" style="left:979px;top:844px;width:1px;height:25px;background:#cdc6ea"></div>
<div class="a" style="left:1080px;top:844px;width:1px;height:25px;background:#cdc6ea"></div>
<div class="a" style="left:1261px;top:844px;width:1px;height:25px;background:#cdc6ea"></div>
<div class="a" style="left:1442px;top:844px;width:1px;height:25px;background:#cdc6ea"></div>
<div class="a" style="left:1583px;top:844px;width:1px;height:25px;background:#cdc6ea"></div>
<div class="a" style="left:1624px;top:844px;width:1px;height:25px;background:#cdc6ea"></div>
<div class="a" style="left:1725px;top:844px;width:1px;height:25px;background:#cdc6ea"></div>
<div class="t" style="left:67px;top:844px;line-height:24px;height:24px;width:48px;overflow:hidden;text-align:right;font-size:12px;color:#3c2434"><span style="display:inline-block;transform:scaleX(0.917);transform-origin:100% 0">39</span></div>
<div class="t" style="left:120px;top:844px;line-height:24px;height:24px;width:218px;overflow:hidden;font-size:12px;color:#3c2434"><span style="display:inline-block;transform:scaleX(0.917);transform-origin:0 0">NFC-E MANGINO CORP.</span></div>
<div class="t" style="left:341px;top:844px;line-height:24px;height:24px;width:98px;overflow:hidden;font-size:12px;color:#3c2434"><span style="display:inline-block;transform:scaleX(0.917);transform-origin:0 0">NB00697</span></div>
<div class="t" style="left:442px;top:844px;line-height:24px;height:24px;width:33px;overflow:hidden;font-size:12px;color:#3c2434"><span style="display:inline-block;transform:scaleX(0.917);transform-origin:0 0">MAN</span></div>
<div class="t" style="left:659px;top:844px;line-height:24px;height:24px;width:138px;overflow:hidden;font-size:12px;color:#3c2434"><span style="display:inline-block;transform:scaleX(0.917);transform-origin:0 0">VIXEN PDV NAO FISCAL</span></div>
<div class="t" style="left:881px;top:844px;line-height:24px;height:24px;width:98px;overflow:hidden;font-size:12px;color:#3c2434"><span style="display:inline-block;transform:scaleX(0.917);transform-origin:0 0">GER</span></div>
<div class="a" style="left:57px;top:869px;width:10px;height:25px;background:#f0f0f0;border-top:1px solid #fff;border-left:1px solid #fff;border-right:1px solid #000;border-bottom:1px solid #000"></div>
<div class="a" style="left:67px;top:869px;width:1659px;height:25px;background:#dff3fe"></div>
<div class="a" style="left:117px;top:869px;width:1px;height:25px;background:#cdc6ea"></div>
<div class="a" style="left:338px;top:869px;width:1px;height:25px;background:#cdc6ea"></div>
<div class="a" style="left:439px;top:869px;width:1px;height:25px;background:#cdc6ea"></div>
<div class="a" style="left:475px;top:869px;width:1px;height:25px;background:#cdc6ea"></div>
<div class="a" style="left:656px;top:869px;width:1px;height:25px;background:#cdc6ea"></div>
<div class="a" style="left:797px;top:869px;width:1px;height:25px;background:#cdc6ea"></div>
<div class="a" style="left:878px;top:869px;width:1px;height:25px;background:#cdc6ea"></div>
<div class="a" style="left:979px;top:869px;width:1px;height:25px;background:#cdc6ea"></div>
<div class="a" style="left:1080px;top:869px;width:1px;height:25px;background:#cdc6ea"></div>
<div class="a" style="left:1261px;top:869px;width:1px;height:25px;background:#cdc6ea"></div>
<div class="a" style="left:1442px;top:869px;width:1px;height:25px;background:#cdc6ea"></div>
<div class="a" style="left:1583px;top:869px;width:1px;height:25px;background:#cdc6ea"></div>
<div class="a" style="left:1624px;top:869px;width:1px;height:25px;background:#cdc6ea"></div>
<div class="a" style="left:1725px;top:869px;width:1px;height:25px;background:#cdc6ea"></div>
<div class="t" style="left:67px;top:869px;line-height:24px;height:24px;width:48px;overflow:hidden;text-align:right;font-size:12px;color:#3c2434"><span style="display:inline-block;transform:scaleX(0.917);transform-origin:100% 0">40</span></div>
<div class="t" style="left:120px;top:869px;line-height:24px;height:24px;width:218px;overflow:hidden;font-size:12px;color:#3c2434"><span style="display:inline-block;transform:scaleX(0.917);transform-origin:0 0">TERMINAL SERVERTS AUXILIAR</span></div>
<div class="t" style="left:341px;top:869px;line-height:24px;height:24px;width:98px;overflow:hidden;font-size:12px;color:#3c2434"><span style="display:inline-block;transform:scaleX(0.917);transform-origin:0 0">NB00697</span></div>
<div class="t" style="left:442px;top:869px;line-height:24px;height:24px;width:33px;overflow:hidden;font-size:12px;color:#3c2434"><span style="display:inline-block;transform:scaleX(0.917);transform-origin:0 0">SWD</span></div>
<div class="t" style="left:478px;top:869px;line-height:24px;height:24px;width:178px;overflow:hidden;font-size:12px;color:#3c2434"><span style="display:inline-block;transform:scaleX(0.917);transform-origin:0 0">FISCAL</span></div>
<div class="t" style="left:659px;top:869px;line-height:24px;height:24px;width:138px;overflow:hidden;font-size:12px;color:#3c2434"><span style="display:inline-block;transform:scaleX(0.917);transform-origin:0 0">VIXEN PDV NAO FISCAL</span></div>
<div class="t" style="left:881px;top:869px;line-height:24px;height:24px;width:98px;overflow:hidden;font-size:12px;color:#3c2434"><span style="display:inline-block;transform:scaleX(0.917);transform-origin:0 0">DP1</span></div>
<svg class="a" style="left:1670px;top:877px" width="9" height="9" viewBox="0 0 9 9"><path d="M0.9 3.6L3.4 7.2L8.2 1" fill="none" stroke="#3a7682" stroke-width="1.9"/></svg>
<div class="a" style="left:57px;top:894px;width:10px;height:4px;background:#f0f0f0;border-top:1px solid #fff;border-left:1px solid #fff;border-right:1px solid #000;border-bottom:1px solid #000"></div>
<div class="a" style="left:67px;top:894px;width:1659px;height:4px;background:#ffffff"></div>
<div class="a" style="left:117px;top:894px;width:1px;height:4px;background:#cdc6ea"></div>
<div class="a" style="left:338px;top:894px;width:1px;height:4px;background:#cdc6ea"></div>
<div class="a" style="left:439px;top:894px;width:1px;height:4px;background:#cdc6ea"></div>
<div class="a" style="left:475px;top:894px;width:1px;height:4px;background:#cdc6ea"></div>
<div class="a" style="left:656px;top:894px;width:1px;height:4px;background:#cdc6ea"></div>
<div class="a" style="left:797px;top:894px;width:1px;height:4px;background:#cdc6ea"></div>
<div class="a" style="left:878px;top:894px;width:1px;height:4px;background:#cdc6ea"></div>
<div class="a" style="left:979px;top:894px;width:1px;height:4px;background:#cdc6ea"></div>
<div class="a" style="left:1080px;top:894px;width:1px;height:4px;background:#cdc6ea"></div>
<div class="a" style="left:1261px;top:894px;width:1px;height:4px;background:#cdc6ea"></div>
<div class="a" style="left:1442px;top:894px;width:1px;height:4px;background:#cdc6ea"></div>
<div class="a" style="left:1583px;top:894px;width:1px;height:4px;background:#cdc6ea"></div>
<div class="a" style="left:1624px;top:894px;width:1px;height:4px;background:#cdc6ea"></div>
<div class="a" style="left:1725px;top:894px;width:1px;height:4px;background:#cdc6ea"></div>
<div class="a" style="left:1874px;top:144px;width:17px;height:754px;background:repeating-conic-gradient(#ececec 0 25%,#ffffff 0 50%) 0 0/2px 2px"></div>
<div class="a" style="left:1874px;top:144px;width:17px;height:17px;background:#f0f0f0;border-top:1px solid #fff;border-left:1px solid #fff;border-right:1px solid #6e6e6e;border-bottom:1px solid #6e6e6e;box-shadow:inset -1px -1px 0 #a0a0a0"></div>
<svg class="a" style="left:1878px;top:149px" width="9" height="6"><path d="M4.5 0L9 5H0z" fill="#000"/></svg>
<div class="a" style="left:1874px;top:161px;width:17px;height:99px;background:#f0f0f0;border-top:1px solid #fff;border-left:1px solid #fff;border-right:1px solid #6e6e6e;border-bottom:1px solid #6e6e6e;box-shadow:inset -1px -1px 0 #a0a0a0"></div>
<div class="a" style="left:1874px;top:882px;width:17px;height:17px;background:#f0f0f0;border-top:1px solid #fff;border-left:1px solid #fff;border-right:1px solid #6e6e6e;border-bottom:1px solid #6e6e6e;box-shadow:inset -1px -1px 0 #a0a0a0"></div>
<svg class="a" style="left:1878px;top:888px" width="9" height="6"><path d="M0 0H9L4.5 5z" fill="#000"/></svg>
<div class="a" style="left:57px;top:898px;width:1817px;height:17px;background:repeating-conic-gradient(#ececec 0 25%,#ffffff 0 50%) 0 0/2px 2px"></div>
<div class="a" style="left:57px;top:898px;width:5px;height:17px;background:#000"></div>
<div class="a" style="left:62px;top:898px;width:17px;height:17px;background:#f0f0f0;border-top:1px solid #fff;border-left:1px solid #fff;border-right:1px solid #6e6e6e;border-bottom:1px solid #6e6e6e;box-shadow:inset -1px -1px 0 #a0a0a0"></div>
<svg class="a" style="left:67px;top:902px" width="6" height="9"><path d="M5 0V9L0 4.5z" fill="#a0a0a0"/></svg>
<div class="a" style="left:1858px;top:898px;width:17px;height:17px;background:#f0f0f0;border-top:1px solid #fff;border-left:1px solid #fff;border-right:1px solid #6e6e6e;border-bottom:1px solid #6e6e6e;box-shadow:inset -1px -1px 0 #a0a0a0"></div>
<svg class="a" style="left:1864px;top:902px" width="6" height="9"><path d="M0 0V9L5 4.5z" fill="#a0a0a0"/></svg>
<div class="a" style="left:1875px;top:899px;width:16px;height:16px;background:#fff"></div>
<div class="a" style="left:460px;top:175px;width:1006px;height:624px;background:#fcfcfc;border-top:1px solid #d6d6d6;border-left:1px solid #d6d6d6;border-right:2px solid #6a6a6a;border-bottom:2px solid #6a6a6a"></div>
<div class="a" style="left:463px;top:178px;width:1000px;height:618px;background:#008a50"></div>
<div class="t" style="left:467px;top:188px;line-height:32px;height:32px;font-size:27.5px;color:#fff;transform:scaleX(0.899);transform-origin:0 0;-webkit-text-stroke:0.7px #008a50">Configuração por Terminal (ALTERAR)</div>
<div class="a" style="left:1418px;top:183px;width:40px;height:20px;background:#17a068"></div>
<svg class="a" style="left:1370px;top:185px" width="80" height="20" viewBox="0 0 80 20"><rect x="5" y="11" width="7" height="1.6" fill="#6e6e6e"/><rect x="5" y="12.6" width="7" height="1.6" fill="#fff"/><rect x="29.3" y="13.2" width="10.4" height="1.4" fill="#fff"/><rect x="30" y="4.9" width="9" height="8.4" fill="none" stroke="#6e6e6e" stroke-width="1.4"/><rect x="30.8" y="6.2" width="7.4" height="1.2" fill="#fff"/><path d="M63 5.6L71 13.6M71 5.6L63 13.6" stroke="#fff" stroke-width="2"/><path d="M63 4.6L71 12.6M71 4.6L63 12.6" stroke="#6e6e6e" stroke-width="2"/></svg>
<div class="a" style="left:473px;top:226px;width:980px;height:520px;background:#fff;border:1px solid #6b6b6b"></div>
<div class="t" style="left:495px;top:250px;line-height:14px;height:14px;font-size:12px;color:#000">Identificação / Local</div>
<div class="a" style="left:615px;top:248px;width:468px;height:23px;background:#ffff99;border:1px solid #a9a9a9;box-shadow:inset 0 0 0 1px #fff"></div>
<div class="t" style="left:619px;top:251px;line-height:14px;height:14px;font-family:'Liberation Mono',monospace;font-size:11.6px;color:#000">MAQUINA NAO FISCAL</div>
<div class="a" style="left:1084px;top:269px;width:2px;height:2px;background:#c00000"></div>
<div class="t" style="left:495px;top:274px;line-height:14px;height:14px;font-size:12px;color:#000">Empresa</div>
<div class="a" style="left:615px;top:272px;width:35px;height:23px;background:#f0f0f0;border:1px solid #a9a9a9;box-shadow:inset 0 0 0 1px #c5daf0"></div>
<div class="t" style="left:619px;top:275px;line-height:14px;height:14px;font-family:'Liberation Mono',monospace;font-size:11.6px;color:#000">OT2</div>
<div class="a" style="left:650px;top:272px;width:10px;height:23px;background:#c8c8c8;border:1px solid #0a3c7c"></div>
<svg class="a" style="left:652px;top:274px" width="6" height="19" viewBox="0 0 6 17" preserveAspectRatio="none"><path d="M0 0H6V2H2V4H5V6H2V9H0z" fill="#0a3c7c"/><path d="M0 10H2V13H4V10H6V17H4V15H0z" fill="#0a3c7c"/></svg>
<div class="a" style="left:687px;top:272px;width:396px;height:23px;background:#f0f0f0;border:1px solid #a9a9a9;box-shadow:inset 0 0 0 1px #c5daf0"></div>
<div class="t" style="left:691px;top:275px;line-height:14px;height:14px;font-family:'Liberation Mono',monospace;font-size:11.6px;color:#000">OTICAS FERREIRA S/A</div>
<div class="t" style="left:495px;top:298px;line-height:14px;height:14px;font-size:12px;color:#000">Grupo do terminal</div>
<div class="a" style="left:615px;top:296px;width:51px;height:23px;background:#ffff99;border:1px solid #a9a9a9;box-shadow:inset 0 0 0 1px #fff"></div>
<div class="t" style="left:615px;top:299px;line-height:14px;height:14px;width:47px;overflow:hidden;text-align:right;font-family:'Liberation Mono',monospace;font-size:11.6px;color:#000">2</div>
<div class="a" style="left:666px;top:296px;width:10px;height:23px;background:#c8c8c8;border:1px solid #0a3c7c"></div>
<svg class="a" style="left:668px;top:298px" width="6" height="19" viewBox="0 0 6 17" preserveAspectRatio="none"><path d="M0 0H6V2H2V4H5V6H2V9H0z" fill="#0a3c7c"/><path d="M0 10H2V13H4V10H6V17H4V15H0z" fill="#0a3c7c"/></svg>
<div class="a" style="left:687px;top:296px;width:396px;height:23px;background:#f0f0f0;border:1px solid #a9a9a9;box-shadow:inset 0 0 0 1px #c5daf0"></div>
<div class="t" style="left:691px;top:299px;line-height:14px;height:14px;font-family:'Liberation Mono',monospace;font-size:11.6px;color:#000">NÃO FISCAL</div>
<div class="t" style="left:495px;top:322px;line-height:14px;height:14px;font-size:12px;color:#000">Sistema</div>
<div class="a" style="left:615px;top:320px;width:52px;height:23px;background:#ffff99;border:1px solid #a9a9a9;box-shadow:inset 0 0 0 1px #fff"></div>
<div class="t" style="left:615px;top:323px;line-height:14px;height:14px;width:48px;overflow:hidden;text-align:right;font-family:'Liberation Mono',monospace;font-size:11.6px;color:#000">3</div>
<div class="a" style="left:667px;top:320px;width:10px;height:23px;background:#c8c8c8;border:1px solid #0a3c7c"></div>
<svg class="a" style="left:669px;top:322px" width="6" height="19" viewBox="0 0 6 17" preserveAspectRatio="none"><path d="M0 0H6V2H2V4H5V6H2V9H0z" fill="#0a3c7c"/><path d="M0 10H2V13H4V10H6V17H4V15H0z" fill="#0a3c7c"/></svg>
<div class="a" style="left:686px;top:320px;width:397px;height:23px;background:#f0f0f0;border:1px solid #a9a9a9;box-shadow:inset 0 0 0 1px #c5daf0"></div>
<div class="t" style="left:690px;top:323px;line-height:14px;height:14px;font-family:'Liberation Mono',monospace;font-size:11.6px;color:#000">VIXEN PDV NAO FISCAL</div>
<div class="t" style="left:495px;top:346px;line-height:14px;height:14px;font-size:12px;color:#000">Tecnologia fiscal</div>
<div class="a" style="left:615px;top:344px;width:52px;height:23px;background:#f0f0f0;border:1px solid #a9a9a9;box-shadow:inset 0 0 0 1px #c5daf0"></div>
<div class="a" style="left:667px;top:344px;width:10px;height:23px;background:#c8c8c8;border:1px solid #0a3c7c"></div>
<svg class="a" style="left:669px;top:346px" width="6" height="19" viewBox="0 0 6 17" preserveAspectRatio="none"><path d="M0 0H6V2H2V4H5V6H2V9H0z" fill="#0a3c7c"/><path d="M0 10H2V13H4V10H6V17H4V15H0z" fill="#0a3c7c"/></svg>
<div class="a" style="left:686px;top:344px;width:397px;height:23px;background:#f0f0f0;border:1px solid #a9a9a9;box-shadow:inset 0 0 0 1px #c5daf0"></div>
<div class="t" style="left:615px;top:368px;line-height:12px;height:12px;font-size:10.6px;color:#ff0000;font-style:italic">Para selecionar a tecnologia fiscal, selecione primeiro o sistema que será utilizado no terminal</div>
<div class="t" style="left:615px;top:380px;line-height:12px;height:12px;font-size:10.6px;color:#ff0000;font-style:italic">(Para alguns sistemas, não é permitido selecionar uma tecnologia fiscal)</div>
<div class="a" style="left:483px;top:421px;width:957px;height:319px;background:#fcfcfc;border:1px solid #d9d9d9;box-shadow:inset -1px -1px 0 #ececec"></div>
<div class="a" style="left:483px;top:396px;width:99px;height:25px;background:#f0f0f0;border:1px solid #d9d9d9"></div>
<div class="t" style="left:483px;top:403px;line-height:14px;height:14px;width:99px;overflow:hidden;text-align:center;font-size:12px;color:#000">Exibição</div>
<div class="a" style="left:583px;top:396px;width:85px;height:25px;background:#f0f0f0;border:1px solid #d9d9d9"></div>
<div class="t" style="left:583px;top:403px;line-height:14px;height:14px;width:85px;overflow:hidden;text-align:center;font-size:12px;color:#a3a3a3">Fiscal</div>
<div class="a" style="left:668px;top:394px;width:117px;height:28px;background:#fff;border:1px solid #d9d9d9;border-bottom:none"></div>
<div class="t" style="left:668px;top:401px;line-height:14px;height:14px;width:117px;overflow:hidden;text-align:center;font-size:12px;color:#000">Financeiro</div>
<div class="a" style="left:673px;top:398px;width:104px;height:19px;border:1px dotted #000"></div>
<div class="a" style="left:785px;top:396px;width:120px;height:25px;background:#f0f0f0;border:1px solid #d9d9d9"></div>
<div class="t" style="left:785px;top:403px;line-height:14px;height:14px;width:120px;overflow:hidden;text-align:center;font-size:12px;color:#a3a3a3">Faturamento</div>
<div class="a" style="left:906px;top:396px;width:119px;height:25px;background:#f0f0f0;border:1px solid #d9d9d9"></div>
<div class="t" style="left:906px;top:403px;line-height:14px;height:14px;width:119px;overflow:hidden;text-align:center;font-size:12px;color:#000">Vixen Ticket</div>
<div class="a" style="left:1026px;top:396px;width:109px;height:25px;background:#f0f0f0;border:1px solid #d9d9d9"></div>
<div class="t" style="left:1026px;top:403px;line-height:14px;height:14px;width:109px;overflow:hidden;text-align:center;font-size:12px;color:#a3a3a3">Vixen POS</div>
<div class="a" style="left:1136px;top:396px;width:122px;height:25px;background:#f0f0f0;border:1px solid #d9d9d9"></div>
<div class="t" style="left:1136px;top:403px;line-height:14px;height:14px;width:122px;overflow:hidden;text-align:center;font-size:12px;color:#a3a3a3">Vixen Totem</div>
<div class="a" style="left:1259px;top:396px;width:181px;height:25px;background:#f0f0f0;border:1px solid #d9d9d9"></div>
<div class="t" style="left:1259px;top:403px;line-height:14px;height:14px;width:181px;overflow:hidden;text-align:center;font-size:12px;color:#000">Config. conta consumo</div>
<div class="a" style="left:667px;top:393px;width:119px;height:30px;border:3px solid #ff0000;border-radius:3px"></div>
<div class="t" style="left:495px;top:430px;line-height:14px;height:14px;font-size:11.3px;font-weight:bold;color:#000">Configurações financeiras</div>
<div class="a" style="left:495px;top:444px;width:815px;height:103px;border:1px solid #a0a0a0"></div>
<div class="t" style="left:507px;top:468px;line-height:14px;height:14px;font-size:12px;color:#000">Centro de custo</div>
<div class="a" style="left:627px;top:466px;width:56px;height:23px;background:#ffff99;border:1px solid #a9a9a9;box-shadow:inset 0 0 0 1px #fff"></div>
<div class="t" style="left:631px;top:469px;line-height:14px;height:14px;font-family:'Liberation Mono',monospace;font-size:11.6px;color:#000">GER</div>
<div class="a" style="left:683px;top:466px;width:10px;height:23px;background:#c8c8c8;border:1px solid #0a3c7c"></div>
<svg class="a" style="left:685px;top:468px" width="6" height="19" viewBox="0 0 6 17" preserveAspectRatio="none"><path d="M0 0H6V2H2V4H5V6H2V9H0z" fill="#0a3c7c"/><path d="M0 10H2V13H4V10H6V17H4V15H0z" fill="#0a3c7c"/></svg>
<div class="a" style="left:711px;top:466px;width:288px;height:23px;background:#f0f0f0;border:1px solid #a9a9a9;box-shadow:inset 0 0 0 1px #c5daf0"></div>
<div class="t" style="left:715px;top:469px;line-height:14px;height:14px;font-family:'Liberation Mono',monospace;font-size:11.6px;color:#000">GERAL</div>
<div class="t" style="left:507px;top:504px;line-height:14px;height:14px;font-size:12px;color:#000">Conta Corrente</div>
<div class="a" style="left:627px;top:502px;width:42px;height:23px;background:#fff;border:1px solid #a9a9a9"></div>
<div class="t" style="left:631px;top:505px;line-height:14px;height:14px;font-family:'Liberation Mono',monospace;font-size:11.6px;color:#000">001</div>
<div class="a" style="left:669px;top:502px;width:10px;height:23px;background:#c8c8c8;border:1px solid #0a3c7c"></div>
<svg class="a" style="left:671px;top:504px" width="6" height="19" viewBox="0 0 6 17" preserveAspectRatio="none"><path d="M0 0H6V2H2V4H5V6H2V9H0z" fill="#0a3c7c"/><path d="M0 10H2V13H4V10H6V17H4V15H0z" fill="#0a3c7c"/></svg>
<div class="a" style="left:711px;top:502px;width:288px;height:23px;background:#f0f0f0;border:1px solid #a9a9a9;box-shadow:inset 0 0 0 1px #c5daf0"></div>
<div class="t" style="left:715px;top:505px;line-height:14px;height:14px;font-family:'Liberation Mono',monospace;font-size:11.6px;color:#000">PDV - FOREVER</div>
<div class="t" style="left:507px;top:527px;line-height:13px;height:13px;font-size:10.8px;font-weight:bold;font-style:italic;color:#ff0000">Atenção! A configuração de conta corrente, que está na tela de documentos é superior a essa opção.</div>
<div class="a" style="left:485px;top:427px;width:838px;height:133px;border:3px solid #ff0000;border-radius:3px"></div>
<div class="t" style="left:488px;top:764px;line-height:14px;height:14px;font-size:11px;color:#fff;text-decoration:underline">ID: 9</div>
<div class="a" style="left:868px;top:760px;width:82px;height:25px;background:#e1e1e1;border:1px solid #adadad"></div>
<div class="t" style="left:868px;top:766px;line-height:14px;height:14px;width:82px;overflow:hidden;text-align:center;font-size:12px;font-weight:bold;color:#000"><u>O</u>k</div>
<div class="a" style="left:976px;top:760px;width:82px;height:25px;background:#e1e1e1;border:1px solid #adadad"></div>
<div class="t" style="left:976px;top:766px;line-height:14px;height:14px;width:82px;overflow:hidden;text-align:center;font-size:11.3px;font-weight:bold;color:#000"><u>C</u>ancelar</div>
<svg class="a" style="left:1413px;top:749px" width="20" height="34" viewBox="0 0 20 34"><path d="M17 22V9C17 4.5 14.5 2 10 2C5.5 2 3 4.5 3 9V25.5C3 30 5.5 32 9 32C12.5 32 14.6 30 14.6 26V10.5C14.6 7.3 12.8 5.3 10.3 5.3C7.8 5.3 6 7.3 6 10.5V23.5" fill="none" stroke="#fff" stroke-width="1.7"/></svg>
</body></html>
